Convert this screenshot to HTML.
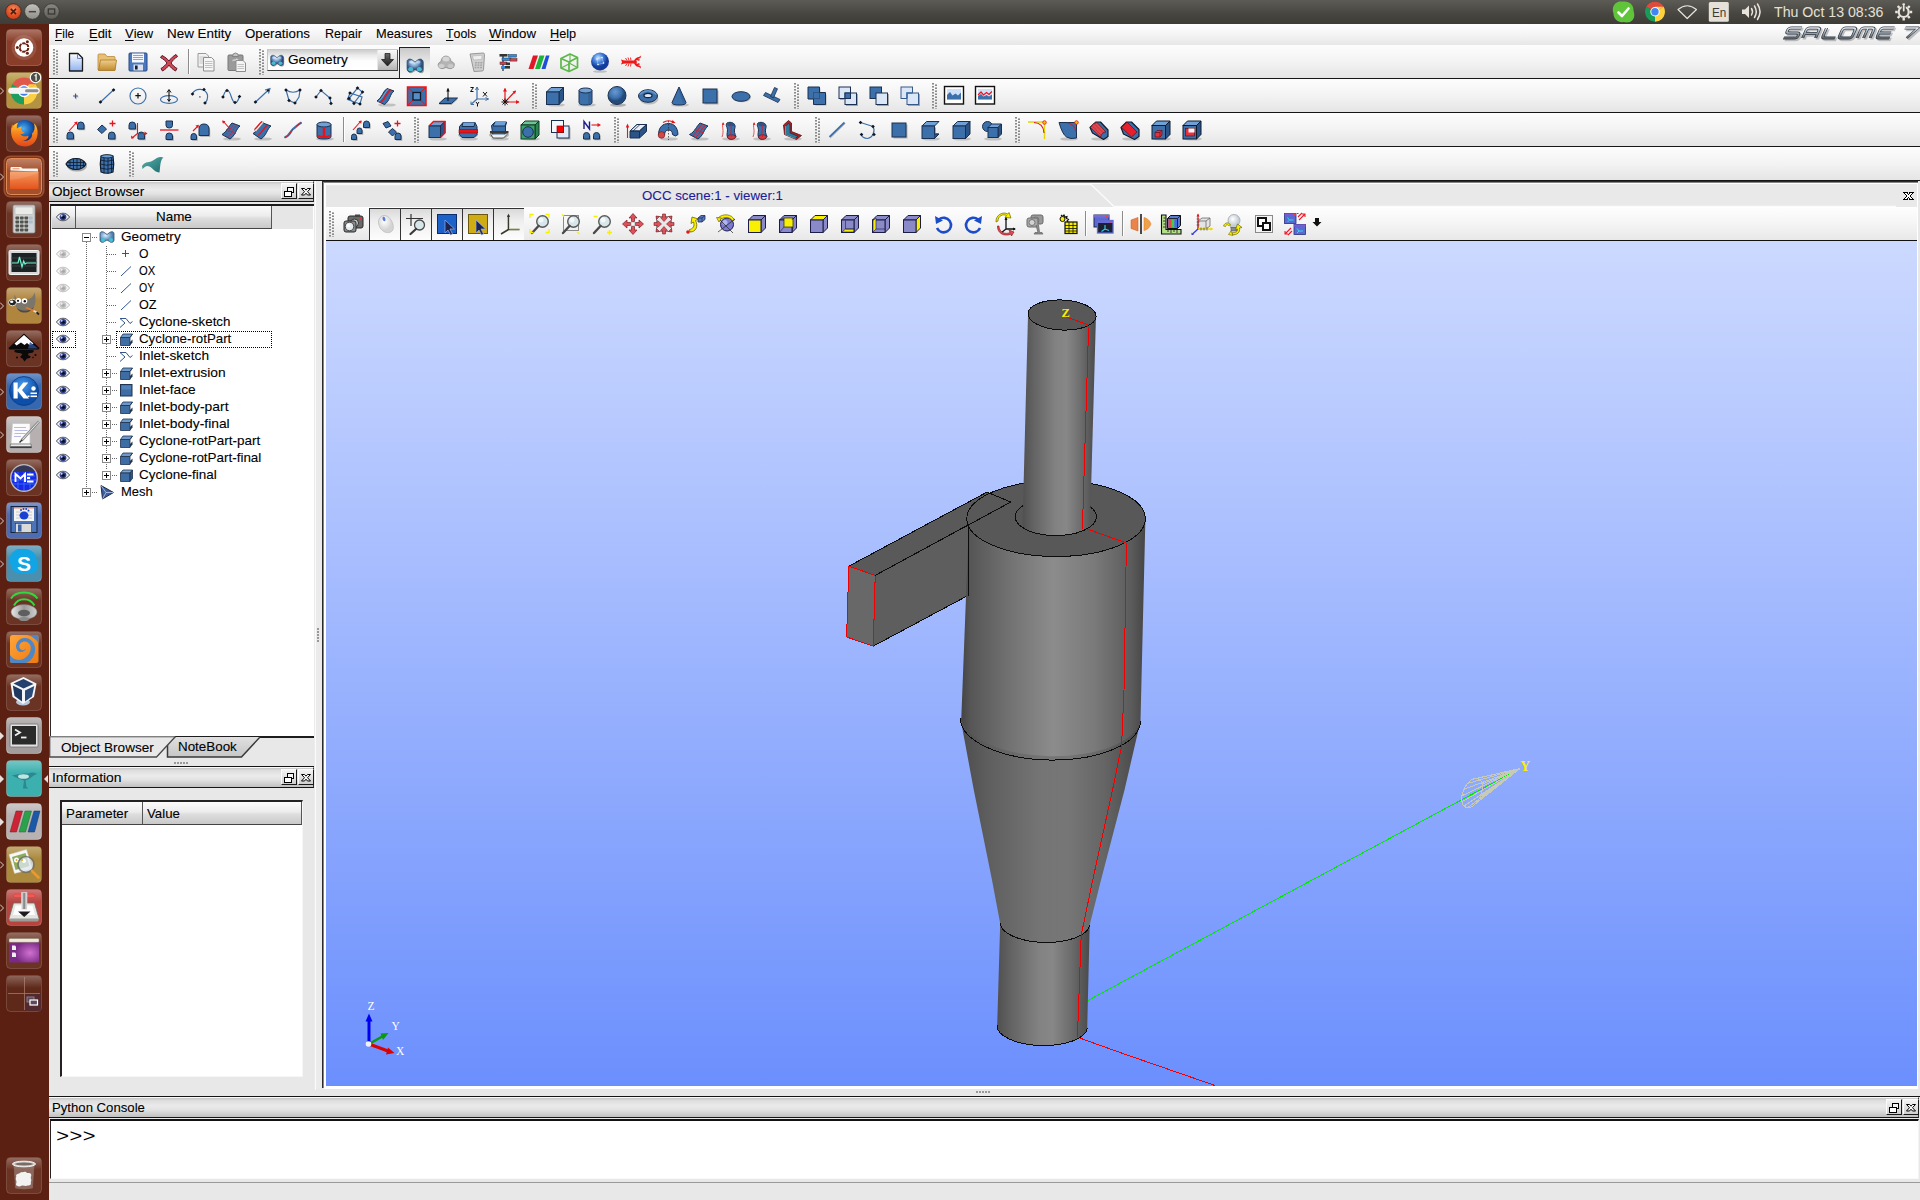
<!DOCTYPE html>
<html><head><meta charset="utf-8"><title>SALOME 7</title>
<style>
html,body{margin:0;padding:0;}
body{width:1920px;height:1200px;overflow:hidden;position:relative;background:#e8e8e8;
 font-family:"Liberation Sans",sans-serif;font-size:14px;color:#000;}
.a{position:absolute;}
.t{position:absolute;white-space:nowrap;line-height:1;}
svg{position:absolute;overflow:visible;}

#panel{left:0;top:0;width:1920px;height:24px;background:linear-gradient(#5d5b55,#46453f 60%,#3d3c37);}
#lbar{left:0;top:24px;width:49px;height:1176px;background:#5b2011;}
#menubar{left:49px;top:24px;width:1871px;height:21px;background:linear-gradient(#ffffff,#f4f4f4 50%,#e7e7e7);}
.tb{left:49px;width:1871px;height:33px;background:linear-gradient(#fdfdfd,#f3f3f3 50%,#e5e5e5);border-bottom:1px solid #161616;}
.menu{top:27px;font-size:14px;}
.menu u{text-decoration:none;display:inline-block;height:13px;border-bottom:1px solid #000;}
.grip{width:6px;height:24px;background-image:linear-gradient(#858585 55%,transparent 55%),linear-gradient(#858585 55%,transparent 55%);background-size:2px 3px,2px 3px;background-position:0 0,3px 1.500px;background-repeat:repeat-y;}
.gripc{position:absolute;width:1.500px;background-image:linear-gradient(#8c8c8c 50%,transparent 50%);background-size:1.500px 3px;}
.dtitle{background:linear-gradient(#c6c6c6,#dedede 14%,#ebebeb 42%,#e2e2e2 62%,#c0c0c0);border-top:1px solid #fafafa;border-bottom:1px solid #151515;border-right:1px solid #333;box-sizing:border-box;}
.dbtn{width:16px;height:16px;border-right:1px solid #1a1a1a;border-bottom:1px solid #1a1a1a;border-left:1px solid #fbfbfb;border-top:1px solid #fbfbfb;box-sizing:border-box;background:linear-gradient(#f4f4f4,#e2e2e2 50%,#cfcfcf);}
.hdr{background:linear-gradient(#fbfbfb,#ececec 45%,#dedede 55%,#c9c9c9);border-right:1px solid #555;border-bottom:1px solid #444;box-sizing:border-box;}
.row{font-size:14px;}
.eb{width:9px;height:9px;box-sizing:border-box;border:1px solid #8a8a8a;background:#fff;}
.eb:before{content:"";position:absolute;left:1px;top:3px;width:5px;height:1px;background:#000;}
.eb.p:after{content:"";position:absolute;left:3px;top:1px;width:1px;height:5px;background:#000;}
.dotv{width:1px;background-image:linear-gradient(#666 50%,transparent 50%);background-size:1px 2px;}
.doth{height:1px;background-image:linear-gradient(90deg,#666 50%,transparent 50%);background-size:2px 1px;}

.sep{width:1px;background:#8c8c8c;}
</style></head>
<body>
<div class="a" id="panel"></div>
<div class="a" id="lbar"></div>
<svg style="left:0;top:0" width="70" height="24"><defs><radialGradient id="wb1" cx="50%" cy="35%"><stop offset="0" stop-color="#f48a5c"/><stop offset="1" stop-color="#d9481f"/></radialGradient><linearGradient id="wb2" x1="0" y1="0" x2="0" y2="1"><stop offset="0" stop-color="#c4c2bc"/><stop offset="1" stop-color="#8f8d87"/></linearGradient><linearGradient id="wb3" x1="0" y1="0" x2="0" y2="1"><stop offset="0" stop-color="#8a8882"/><stop offset="1" stop-color="#5f5d58"/></linearGradient></defs><circle cx="13.400" cy="11.500" r="7.800" fill="url(#wb1)" stroke="#3a2a22" stroke-width=".8"/><path d="M10.800 8.900l5.200 5.200M16 8.900l-5.200 5.200" stroke="#4a1c0c" stroke-width="1.500"/><circle cx="32.400" cy="11.500" r="7.800" fill="url(#wb2)" stroke="#3a3935" stroke-width=".8"/><path d="M28.800 11.700h7.200" stroke="#44433e" stroke-width="1.500"/><circle cx="51.500" cy="11.500" r="7.800" fill="url(#wb3)" stroke="#3a3935" stroke-width=".8"/><rect x="48.300" y="9" width="6.400" height="5" fill="none" stroke="#3a3935" stroke-width="1.300"/></svg>
<svg style="left:1600px;top:0" width="320" height="24"><path d="M17 2.500C19 .8 21.500 1.800 23.500 1.500 29.500 1 34 5 33.500 11c1.500 3.500 1 8-2 10-2.500 2-5.500 1.500-8 1C18.500 23 13.500 19.500 13.500 13.500 12 9 13 4.500 17 2.500Z" fill="#5fc43a"/><path d="M18.500 12.500l3.500 3.500 6.500-7.500" stroke="#fff" stroke-width="2.600" fill="none" stroke-linecap="round" stroke-linejoin="round"/><g transform="translate(55 11.700)"><path d="M0 0L-8.660 -5A10 10 0 0 1 8.660 -5Z" fill="#de4b3c"/><path d="M0 0L8.660 -5A10 10 0 0 1 0 10Z" fill="#fdd23a"/><path d="M0 0L0 10A10 10 0 0 1 -8.660 -5Z" fill="#1a9c58"/><path d="M0 0L8.660 -5H0Z" fill="#fdd23a"/><circle r="4.700" fill="#fff"/><circle r="3.700" fill="#4285f4"/></g><path d="M78 9.500Q87 2 96.500 9.500L87.200 18.500Z" fill="none" stroke="#e8e4dc" stroke-width="1.200" stroke-linejoin="round"/><rect x="108.800" y="2" width="20" height="19.700" rx="1.500" fill="#e6e1d8"/><path d="M142 9.500h3l4-4v12.500l-4-4h-3Z" fill="#e8e4dc"/><path d="M151.500 8.500q2 3 0 6.500M154.500 6q3.500 5.500 0 11.500M157.500 4q5 7.500 0 15.500" stroke="#e8e4dc" stroke-width="1.500" fill="none" stroke-linecap="round"/><g transform="translate(303.700 12)" stroke="#e8e4dc" fill="none"><circle r="5" stroke-width="2.200"/><path d="M0 -8.500V-6M0 8.500V6M-8.500 0H-6M8.500 0H6M-6 -6l1.800 1.800M6 6L4.200 4.200M-6 6l1.800-1.800M6 -6L4.200 -4.200" stroke-width="2.400"/><path d="M0 -7V-1" stroke="#46453f" stroke-width="4"/><path d="M0 -7.500V-1.500" stroke-width="1.800" stroke-linecap="round"/></g></svg>
<div class="t " style="left:1712.1px;top:5.5px;font-size:13.5px;color:#3c3b37;transform:scaleX(0.8658);transform-origin:0 0;">En</div>
<div class="t " style="left:1773.8px;top:4px;font-size:15px;color:#e4e0d6;transform:scaleX(0.9439);transform-origin:0 0;">Thu Oct 13 08:36</div>
<div class="a" id="menubar"></div>
<div class="t menu" style="left:55.3px;top:27px;font-size:13.5px;color:#000;transform:scaleX(0.8821);transform-origin:0 0;-webkit-text-stroke:.1px;"><u>F</u>ile</div>
<div class="t menu" style="left:88.6px;top:27px;font-size:13.5px;color:#000;transform:scaleX(0.9579);transform-origin:0 0;-webkit-text-stroke:.1px;"><u>E</u>dit</div>
<div class="t menu" style="left:125.3px;top:27px;font-size:13.5px;color:#000;transform:scaleX(0.9610);transform-origin:0 0;-webkit-text-stroke:.1px;"><u>V</u>iew</div>
<div class="t menu" style="left:167.3px;top:27px;font-size:13.5px;color:#000;transform:scaleX(0.9949);transform-origin:0 0;-webkit-text-stroke:.1px;">New Entity</div>
<div class="t menu" style="left:245.3px;top:27px;font-size:13.5px;color:#000;transform:scaleX(0.9826);transform-origin:0 0;-webkit-text-stroke:.1px;">Operations</div>
<div class="t menu" style="left:324.6px;top:27px;font-size:13.5px;color:#000;transform:scaleX(0.9276);transform-origin:0 0;-webkit-text-stroke:.1px;">Repair</div>
<div class="t menu" style="left:375.6px;top:27px;font-size:13.5px;color:#000;transform:scaleX(0.9497);transform-origin:0 0;-webkit-text-stroke:.1px;">Measures</div>
<div class="t menu" style="left:446.3px;top:27px;font-size:13.5px;color:#000;transform:scaleX(0.9170);transform-origin:0 0;-webkit-text-stroke:.1px;"><u>T</u>ools</div>
<div class="t menu" style="left:488.9px;top:27px;font-size:13.5px;color:#000;transform:scaleX(0.9785);transform-origin:0 0;-webkit-text-stroke:.1px;"><u>W</u>indow</div>
<div class="t menu" style="left:550.3px;top:27px;font-size:13.5px;color:#000;transform:scaleX(0.9436);transform-origin:0 0;-webkit-text-stroke:.1px;"><u>H</u>elp</div>
<svg style="left:1780px;top:27px" width="140" height="16"><defs><linearGradient id="slg" x1="0" y1="0" x2="0" y2="1"><stop offset="0" stop-color="#e4ebf2"/><stop offset=".5" stop-color="#9aa6b4"/><stop offset="1" stop-color="#5c6670"/></linearGradient></defs><path d="M14 1H3.500Q1 1 1 3V4.200Q1 6 3.500 6H11.500Q14 6 14 8V9Q14 11 11.500 11H0.500" fill="none" stroke-linejoin="round" stroke="#000" stroke-opacity=".22" stroke-width="3.400" transform="translate(9.5 1.500) skewX(-24)"/><path d="M1 11V3.500Q1 1 3.500 1H11.500Q14 1 14 3.500V11M1 6.500H14" fill="none" stroke-linejoin="round" stroke="#000" stroke-opacity=".22" stroke-width="3.400" transform="translate(28.0 1.500) skewX(-24)"/><path d="M1 1V8.500Q1 11 3.500 11H14" fill="none" stroke-linejoin="round" stroke="#000" stroke-opacity=".22" stroke-width="3.400" transform="translate(47.5 1.500) skewX(-24)"/><path d="M3.500 1H11.500Q14 1 14 3.500V8.500Q14 11 11.500 11H3.500Q1 11 1 8.500V3.500Q1 1 3.500 1Z" fill="none" stroke-linejoin="round" stroke="#000" stroke-opacity=".22" stroke-width="3.400" transform="translate(64.0 1.500) skewX(-24)"/><path d="M1 11V3.500Q1 1 3.500 1H11.500Q14 1 14 3.500V11M7.500 1V11" fill="none" stroke-linejoin="round" stroke="#000" stroke-opacity=".22" stroke-width="3.400" transform="translate(82.5 1.500) skewX(-24)"/><path d="M14 1H3.500Q1 1 1 3.500V8.500Q1 11 3.500 11H14M1 6H13" fill="none" stroke-linejoin="round" stroke="#000" stroke-opacity=".22" stroke-width="3.400" transform="translate(102.0 1.500) skewX(-24)"/><path d="M1 1H14L7 11" fill="none" stroke-linejoin="round" stroke="#000" stroke-opacity=".22" stroke-width="3.400" transform="translate(126.0 1.500) skewX(-24)"/><path d="M14 1H3.500Q1 1 1 3V4.200Q1 6 3.500 6H11.500Q14 6 14 8V9Q14 11 11.500 11H0.500" fill="none" stroke-linejoin="round" stroke="#343a42" stroke-width="3" transform="translate(8 0) skewX(-24)"/><path d="M1 11V3.500Q1 1 3.500 1H11.500Q14 1 14 3.500V11M1 6.500H14" fill="none" stroke-linejoin="round" stroke="#343a42" stroke-width="3" transform="translate(26.5 0) skewX(-24)"/><path d="M1 1V8.500Q1 11 3.500 11H14" fill="none" stroke-linejoin="round" stroke="#343a42" stroke-width="3" transform="translate(46 0) skewX(-24)"/><path d="M3.500 1H11.500Q14 1 14 3.500V8.500Q14 11 11.500 11H3.500Q1 11 1 8.500V3.500Q1 1 3.500 1Z" fill="none" stroke-linejoin="round" stroke="#343a42" stroke-width="3" transform="translate(62.5 0) skewX(-24)"/><path d="M1 11V3.500Q1 1 3.500 1H11.500Q14 1 14 3.500V11M7.500 1V11" fill="none" stroke-linejoin="round" stroke="#343a42" stroke-width="3" transform="translate(81 0) skewX(-24)"/><path d="M14 1H3.500Q1 1 1 3.500V8.500Q1 11 3.500 11H14M1 6H13" fill="none" stroke-linejoin="round" stroke="#343a42" stroke-width="3" transform="translate(100.5 0) skewX(-24)"/><path d="M1 1H14L7 11" fill="none" stroke-linejoin="round" stroke="#343a42" stroke-width="3" transform="translate(124.5 0) skewX(-24)"/><path d="M14 1H3.500Q1 1 1 3V4.200Q1 6 3.500 6H11.500Q14 6 14 8V9Q14 11 11.500 11H0.500" fill="none" stroke-linejoin="round" stroke="url(#slg)" stroke-width="1.500" transform="translate(8 0) skewX(-24)"/><path d="M1 11V3.500Q1 1 3.500 1H11.500Q14 1 14 3.500V11M1 6.500H14" fill="none" stroke-linejoin="round" stroke="url(#slg)" stroke-width="1.500" transform="translate(26.5 0) skewX(-24)"/><path d="M1 1V8.500Q1 11 3.500 11H14" fill="none" stroke-linejoin="round" stroke="url(#slg)" stroke-width="1.500" transform="translate(46 0) skewX(-24)"/><path d="M3.500 1H11.500Q14 1 14 3.500V8.500Q14 11 11.500 11H3.500Q1 11 1 8.500V3.500Q1 1 3.500 1Z" fill="none" stroke-linejoin="round" stroke="url(#slg)" stroke-width="1.500" transform="translate(62.5 0) skewX(-24)"/><path d="M1 11V3.500Q1 1 3.500 1H11.500Q14 1 14 3.500V11M7.500 1V11" fill="none" stroke-linejoin="round" stroke="url(#slg)" stroke-width="1.500" transform="translate(81 0) skewX(-24)"/><path d="M14 1H3.500Q1 1 1 3.500V8.500Q1 11 3.500 11H14M1 6H13" fill="none" stroke-linejoin="round" stroke="url(#slg)" stroke-width="1.500" transform="translate(100.5 0) skewX(-24)"/><path d="M1 1H14L7 11" fill="none" stroke-linejoin="round" stroke="url(#slg)" stroke-width="1.500" transform="translate(124.5 0) skewX(-24)"/></svg>
<div class="a tb" style="top:45px"></div>
<div class="a tb" style="top:79px"></div>
<div class="a tb" style="top:113px"></div>
<div class="a tb" style="top:147px"></div>
<div class="a dtitle" style="left:49px;top:181px;width:265px;height:21px;"></div>
<div class="t " style="left:51.6px;top:185px;font-size:13.5px;color:#000;transform:scaleX(1.0002);transform-origin:0 0;-webkit-text-stroke:.1px;">Object Browser</div>
<div class="a dbtn" style="left:281px;top:183px;"></div><svg style="left:281px;top:183px" width="16" height="16" shape-rendering="crispEdges"><path d="M6.500 4h6v5.500h-6z" fill="#f4f4f4" stroke="#000" stroke-width="1"/><path d="M6.500 4.500h6" stroke="#000" stroke-width="1.600"/><path d="M3.500 8h6.500v5h-6.500z" fill="#fff" stroke="#000" stroke-width="1"/><path d="M3.500 8.500h6.500" stroke="#000" stroke-width="1.600"/></svg><div class="a dbtn" style="left:298px;top:183px;"></div><svg style="left:298px;top:183px" width="16" height="16"><path d="M3.500 5.500h3l1.500 1.700 1.500-1.700h3l-3 3.200 3 3.300h-3l-1.500-1.800-1.500 1.800h-3l3-3.300z" fill="#fff" stroke="#000" stroke-width="1"/></svg>
<div class="a " style="left:50px;top:204px;width:264px;height:532px;background:#fff;border-left:1px solid #2a2a2a;border-top:2px solid #1c1c1c;box-sizing:border-box;"></div>
<div class="a " style="left:51px;top:206px;width:262px;height:23px;background:#e6e6e6;"></div>
<div class="a hdr" style="left:52px;top:206px;width:24px;height:23px;"></div>
<div class="a hdr" style="left:76px;top:206px;width:196px;height:23px;"></div>
<svg style="left:56px;top:213px" width="14" height="8" viewBox="0 0 16 10" preserveAspectRatio="none"><path d="M0.5 5C3 1 6 0.3 8 0.3S13 1 15.5 5C13 8.6 10.5 9.7 8 9.7S3 8.6 0.5 5Z" fill="#f4f5fa" stroke="#26283a" stroke-width="1"/><circle cx="8" cy="5" r="3.9" fill="#2b3f8c"/><circle cx="8.3" cy="5.3" r="1.9" fill="#0a0d24"/><circle cx="6.4" cy="3.4" r="1.2" fill="#c9d2f2"/></svg>
<div class="t " style="left:155.9px;top:210px;font-size:13.5px;color:#000;transform:scaleX(0.9940);transform-origin:0 0;-webkit-text-stroke:.1px;">Name</div>
<div class="a dotv" style="left:86px;top:242px;width:1px;height:245px;"></div>
<div class="a dotv" style="left:106px;top:246px;width:1px;height:224px;"></div>
<div class="a eb " style="left:82px;top:233px"></div>
<div class="a doth" style="left:92px;top:237px;width:5px;height:1px;"></div>
<svg style="left:99px;top:229px" width="16" height="16" viewBox="0 0 16 16"><defs><radialGradient id="gg" cx="40%" cy="35%"><stop offset="0" stop-color="#d9ecfb"/><stop offset="1" stop-color="#4d7fb3"/></radialGradient></defs><path d="M1 4.5C1 2.5 4 2 6 4L8 5.5 10 4C12 2 15 2.5 15 4.5V11C15 13.5 12 14 10.5 12.5L8 11 5.5 12.5C4 14 1 13.5 1 11Z" fill="url(#gg)" stroke="#33506e" stroke-width=".8"/><circle cx="4" cy="11" r="2" fill="#3fc1d6"/><circle cx="12" cy="11" r="2" fill="#3fc1d6"/></svg>
<div class="t row" style="left:120.9px;top:230px;font-size:13.5px;color:#000;transform:scaleX(1.0071);transform-origin:0 0;-webkit-text-stroke:.1px;">Geometry</div>
<svg style="left:56px;top:250px" width="14" height="8" viewBox="0 0 16 10" preserveAspectRatio="none"><path d="M0.5 5C3 1 6 0.3 8 0.3S13 1 15.5 5C13 8.6 10.5 9.7 8 9.7S3 8.6 0.5 5Z" fill="#f6f6f6" stroke="#b0b0b0" stroke-width="1"/><circle cx="8" cy="5" r="3.9" fill="#c4c4c4"/><circle cx="8.3" cy="5.3" r="1.9" fill="#a8a8a8"/><circle cx="6.4" cy="3.4" r="1.2" fill="#ededed"/></svg>
<div class="a doth" style="left:107px;top:254px;width:10px;height:1px;"></div>
<svg style="left:118px;top:246px" width="16" height="16" viewBox="0 0 16 16"><path d="M7.5 4v7M4 7.5h7" stroke="#33558c" stroke-width="1" fill="none"/></svg>
<div class="t row" style="left:138.9px;top:247px;font-size:13.5px;color:#000;transform:scaleX(0.9034);transform-origin:0 0;-webkit-text-stroke:.1px;">O</div>
<svg style="left:56px;top:267px" width="14" height="8" viewBox="0 0 16 10" preserveAspectRatio="none"><path d="M0.5 5C3 1 6 0.3 8 0.3S13 1 15.5 5C13 8.6 10.5 9.7 8 9.7S3 8.6 0.5 5Z" fill="#f6f6f6" stroke="#b0b0b0" stroke-width="1"/><circle cx="8" cy="5" r="3.9" fill="#c4c4c4"/><circle cx="8.3" cy="5.3" r="1.9" fill="#a8a8a8"/><circle cx="6.4" cy="3.4" r="1.2" fill="#ededed"/></svg>
<div class="a doth" style="left:107px;top:271px;width:10px;height:1px;"></div>
<svg style="left:118px;top:263px" width="16" height="16" viewBox="0 0 16 16"><path d="M3 13L13 3.5" stroke="#33558c" stroke-width="1" fill="none"/></svg>
<div class="t row" style="left:138.9px;top:264px;font-size:13.5px;color:#000;transform:scaleX(0.8301);transform-origin:0 0;-webkit-text-stroke:.1px;">OX</div>
<svg style="left:56px;top:284px" width="14" height="8" viewBox="0 0 16 10" preserveAspectRatio="none"><path d="M0.5 5C3 1 6 0.3 8 0.3S13 1 15.5 5C13 8.6 10.5 9.7 8 9.7S3 8.6 0.5 5Z" fill="#f6f6f6" stroke="#b0b0b0" stroke-width="1"/><circle cx="8" cy="5" r="3.9" fill="#c4c4c4"/><circle cx="8.3" cy="5.3" r="1.9" fill="#a8a8a8"/><circle cx="6.4" cy="3.4" r="1.2" fill="#ededed"/></svg>
<div class="a doth" style="left:107px;top:288px;width:10px;height:1px;"></div>
<svg style="left:118px;top:280px" width="16" height="16" viewBox="0 0 16 16"><path d="M3 13L13 3.5" stroke="#33558c" stroke-width="1" fill="none"/></svg>
<div class="t row" style="left:138.9px;top:281px;font-size:13.5px;color:#000;transform:scaleX(0.7840);transform-origin:0 0;-webkit-text-stroke:.1px;">OY</div>
<svg style="left:56px;top:301px" width="14" height="8" viewBox="0 0 16 10" preserveAspectRatio="none"><path d="M0.5 5C3 1 6 0.3 8 0.3S13 1 15.5 5C13 8.6 10.5 9.7 8 9.7S3 8.6 0.5 5Z" fill="#f6f6f6" stroke="#b0b0b0" stroke-width="1"/><circle cx="8" cy="5" r="3.9" fill="#c4c4c4"/><circle cx="8.3" cy="5.3" r="1.9" fill="#a8a8a8"/><circle cx="6.4" cy="3.4" r="1.2" fill="#ededed"/></svg>
<div class="a doth" style="left:107px;top:305px;width:10px;height:1px;"></div>
<svg style="left:118px;top:297px" width="16" height="16" viewBox="0 0 16 16"><path d="M3 13L13 3.5" stroke="#33558c" stroke-width="1" fill="none"/></svg>
<div class="t row" style="left:138.9px;top:298px;font-size:13.5px;color:#000;transform:scaleX(0.9333);transform-origin:0 0;-webkit-text-stroke:.1px;">OZ</div>
<svg style="left:56px;top:318px" width="14" height="8" viewBox="0 0 16 10" preserveAspectRatio="none"><path d="M0.5 5C3 1 6 0.3 8 0.3S13 1 15.5 5C13 8.6 10.5 9.7 8 9.7S3 8.6 0.5 5Z" fill="#f4f5fa" stroke="#26283a" stroke-width="1"/><circle cx="8" cy="5" r="3.9" fill="#2b3f8c"/><circle cx="8.3" cy="5.3" r="1.9" fill="#0a0d24"/><circle cx="6.4" cy="3.4" r="1.2" fill="#c9d2f2"/></svg>
<div class="a doth" style="left:107px;top:322px;width:10px;height:1px;"></div>
<svg style="left:118px;top:314px" width="16" height="16" viewBox="0 0 16 16"><path d="M14.5 7.5L12 9.5L8 4.5H2L7 9L2 13.5" stroke="#33558c" stroke-width="1" fill="none"/></svg>
<div class="t row" style="left:138.9px;top:315px;font-size:13.5px;color:#000;transform:scaleX(0.9914);transform-origin:0 0;-webkit-text-stroke:.1px;">Cyclone-sketch</div>
<svg style="left:56px;top:335px" width="14" height="8" viewBox="0 0 16 10" preserveAspectRatio="none"><path d="M0.5 5C3 1 6 0.3 8 0.3S13 1 15.5 5C13 8.6 10.5 9.7 8 9.7S3 8.6 0.5 5Z" fill="#f4f5fa" stroke="#26283a" stroke-width="1"/><circle cx="8" cy="5" r="3.9" fill="#2b3f8c"/><circle cx="8.3" cy="5.3" r="1.9" fill="#0a0d24"/><circle cx="6.4" cy="3.4" r="1.2" fill="#c9d2f2"/></svg>
<div class="a eb p" style="left:102px;top:335px"></div>
<div class="a doth" style="left:112px;top:339px;width:5px;height:1px;"></div>
<svg style="left:118px;top:331px" width="16" height="16" viewBox="0 0 16 16"><path d="M2.5 6.5L5 3h9.5L12 6.5Z" fill="#6e9acb" stroke="#1f3450" stroke-width=".8"/><path d="M2.5 6.5H12V14.5H2.5Z" fill="#3d6da3" stroke="#1f3450" stroke-width=".8"/><path d="M12 11L14.5 8.5V11.5L12 14.5Z" fill="#1f3450"/><path d="M12 6.5l2.5-3.5" stroke="#1f3450" stroke-width=".8"/></svg>
<div class="t row" style="left:138.9px;top:332px;font-size:13.5px;color:#000;transform:scaleX(0.9840);transform-origin:0 0;-webkit-text-stroke:.1px;">Cyclone-rotPart</div>
<svg style="left:56px;top:352px" width="14" height="8" viewBox="0 0 16 10" preserveAspectRatio="none"><path d="M0.5 5C3 1 6 0.3 8 0.3S13 1 15.5 5C13 8.6 10.5 9.7 8 9.7S3 8.6 0.5 5Z" fill="#f4f5fa" stroke="#26283a" stroke-width="1"/><circle cx="8" cy="5" r="3.9" fill="#2b3f8c"/><circle cx="8.3" cy="5.3" r="1.9" fill="#0a0d24"/><circle cx="6.4" cy="3.4" r="1.2" fill="#c9d2f2"/></svg>
<div class="a doth" style="left:107px;top:356px;width:10px;height:1px;"></div>
<svg style="left:118px;top:348px" width="16" height="16" viewBox="0 0 16 16"><path d="M14.5 7.5L12 9.5L8 4.5H2L7 9L2 13.5" stroke="#33558c" stroke-width="1" fill="none"/></svg>
<div class="t row" style="left:138.9px;top:349px;font-size:13.5px;color:#000;transform:scaleX(1.0140);transform-origin:0 0;-webkit-text-stroke:.1px;">Inlet-sketch</div>
<svg style="left:56px;top:369px" width="14" height="8" viewBox="0 0 16 10" preserveAspectRatio="none"><path d="M0.5 5C3 1 6 0.3 8 0.3S13 1 15.5 5C13 8.6 10.5 9.7 8 9.7S3 8.6 0.5 5Z" fill="#f4f5fa" stroke="#26283a" stroke-width="1"/><circle cx="8" cy="5" r="3.9" fill="#2b3f8c"/><circle cx="8.3" cy="5.3" r="1.9" fill="#0a0d24"/><circle cx="6.4" cy="3.4" r="1.2" fill="#c9d2f2"/></svg>
<div class="a eb p" style="left:102px;top:369px"></div>
<div class="a doth" style="left:112px;top:373px;width:5px;height:1px;"></div>
<svg style="left:118px;top:365px" width="16" height="16" viewBox="0 0 16 16"><path d="M2.5 6.5L5 3h9.5L12 6.5Z" fill="#6e9acb" stroke="#1f3450" stroke-width=".8"/><path d="M2.5 6.5H12V14.5H2.5Z" fill="#3d6da3" stroke="#1f3450" stroke-width=".8"/><path d="M12 11L14.5 8.5V11.5L12 14.5Z" fill="#1f3450"/><path d="M12 6.5l2.5-3.5" stroke="#1f3450" stroke-width=".8"/></svg>
<div class="t row" style="left:138.9px;top:366px;font-size:13.5px;color:#000;transform:scaleX(1.0224);transform-origin:0 0;-webkit-text-stroke:.1px;">Inlet-extrusion</div>
<svg style="left:56px;top:386px" width="14" height="8" viewBox="0 0 16 10" preserveAspectRatio="none"><path d="M0.5 5C3 1 6 0.3 8 0.3S13 1 15.5 5C13 8.6 10.5 9.7 8 9.7S3 8.6 0.5 5Z" fill="#f4f5fa" stroke="#26283a" stroke-width="1"/><circle cx="8" cy="5" r="3.9" fill="#2b3f8c"/><circle cx="8.3" cy="5.3" r="1.9" fill="#0a0d24"/><circle cx="6.4" cy="3.4" r="1.2" fill="#c9d2f2"/></svg>
<div class="a eb p" style="left:102px;top:386px"></div>
<div class="a doth" style="left:112px;top:390px;width:5px;height:1px;"></div>
<svg style="left:118px;top:382px" width="16" height="16" viewBox="0 0 16 16"><rect x="2.5" y="2.5" width="11.5" height="11.5" fill="#3d6da3" stroke="#1f3450" stroke-width="1"/><rect x="3.5" y="3.5" width="9.5" height="4" fill="#5f8fc6" opacity=".6"/></svg>
<div class="t row" style="left:138.9px;top:383px;font-size:13.5px;color:#000;transform:scaleX(1.0210);transform-origin:0 0;-webkit-text-stroke:.1px;">Inlet-face</div>
<svg style="left:56px;top:403px" width="14" height="8" viewBox="0 0 16 10" preserveAspectRatio="none"><path d="M0.5 5C3 1 6 0.3 8 0.3S13 1 15.5 5C13 8.6 10.5 9.7 8 9.7S3 8.6 0.5 5Z" fill="#f4f5fa" stroke="#26283a" stroke-width="1"/><circle cx="8" cy="5" r="3.9" fill="#2b3f8c"/><circle cx="8.3" cy="5.3" r="1.9" fill="#0a0d24"/><circle cx="6.4" cy="3.4" r="1.2" fill="#c9d2f2"/></svg>
<div class="a eb p" style="left:102px;top:403px"></div>
<div class="a doth" style="left:112px;top:407px;width:5px;height:1px;"></div>
<svg style="left:118px;top:399px" width="16" height="16" viewBox="0 0 16 16"><path d="M2.5 6.5L5 3h9.5L12 6.5Z" fill="#6e9acb" stroke="#1f3450" stroke-width=".8"/><path d="M2.5 6.5H12V14.5H2.5Z" fill="#3d6da3" stroke="#1f3450" stroke-width=".8"/><path d="M12 11L14.5 8.5V11.5L12 14.5Z" fill="#1f3450"/><path d="M12 6.5l2.5-3.5" stroke="#1f3450" stroke-width=".8"/></svg>
<div class="t row" style="left:138.9px;top:400px;font-size:13.5px;color:#000;transform:scaleX(1.0282);transform-origin:0 0;-webkit-text-stroke:.1px;">Inlet-body-part</div>
<svg style="left:56px;top:420px" width="14" height="8" viewBox="0 0 16 10" preserveAspectRatio="none"><path d="M0.5 5C3 1 6 0.3 8 0.3S13 1 15.5 5C13 8.6 10.5 9.7 8 9.7S3 8.6 0.5 5Z" fill="#f4f5fa" stroke="#26283a" stroke-width="1"/><circle cx="8" cy="5" r="3.9" fill="#2b3f8c"/><circle cx="8.3" cy="5.3" r="1.9" fill="#0a0d24"/><circle cx="6.4" cy="3.4" r="1.2" fill="#c9d2f2"/></svg>
<div class="a eb p" style="left:102px;top:420px"></div>
<div class="a doth" style="left:112px;top:424px;width:5px;height:1px;"></div>
<svg style="left:118px;top:416px" width="16" height="16" viewBox="0 0 16 16"><path d="M2.5 6.5L5 3h9.5L12 6.5Z" fill="#6e9acb" stroke="#1f3450" stroke-width=".8"/><path d="M2.5 6.5H12V14.5H2.5Z" fill="#3d6da3" stroke="#1f3450" stroke-width=".8"/><path d="M12 11L14.5 8.5V11.5L12 14.5Z" fill="#1f3450"/><path d="M12 6.5l2.5-3.5" stroke="#1f3450" stroke-width=".8"/></svg>
<div class="t row" style="left:138.9px;top:417px;font-size:13.5px;color:#000;transform:scaleX(1.0241);transform-origin:0 0;-webkit-text-stroke:.1px;">Inlet-body-final</div>
<svg style="left:56px;top:437px" width="14" height="8" viewBox="0 0 16 10" preserveAspectRatio="none"><path d="M0.5 5C3 1 6 0.3 8 0.3S13 1 15.5 5C13 8.6 10.5 9.7 8 9.7S3 8.6 0.5 5Z" fill="#f4f5fa" stroke="#26283a" stroke-width="1"/><circle cx="8" cy="5" r="3.9" fill="#2b3f8c"/><circle cx="8.3" cy="5.3" r="1.9" fill="#0a0d24"/><circle cx="6.4" cy="3.4" r="1.2" fill="#c9d2f2"/></svg>
<div class="a eb p" style="left:102px;top:437px"></div>
<div class="a doth" style="left:112px;top:441px;width:5px;height:1px;"></div>
<svg style="left:118px;top:433px" width="16" height="16" viewBox="0 0 16 16"><path d="M2.5 6.5L5 3h9.5L12 6.5Z" fill="#6e9acb" stroke="#1f3450" stroke-width=".8"/><path d="M2.5 6.5H12V14.5H2.5Z" fill="#3d6da3" stroke="#1f3450" stroke-width=".8"/><path d="M12 11L14.5 8.5V11.5L12 14.5Z" fill="#1f3450"/><path d="M12 6.5l2.5-3.5" stroke="#1f3450" stroke-width=".8"/></svg>
<div class="t row" style="left:138.9px;top:434px;font-size:13.5px;color:#000;transform:scaleX(0.9971);transform-origin:0 0;-webkit-text-stroke:.1px;">Cyclone-rotPart-part</div>
<svg style="left:56px;top:454px" width="14" height="8" viewBox="0 0 16 10" preserveAspectRatio="none"><path d="M0.5 5C3 1 6 0.3 8 0.3S13 1 15.5 5C13 8.6 10.5 9.7 8 9.7S3 8.6 0.5 5Z" fill="#f4f5fa" stroke="#26283a" stroke-width="1"/><circle cx="8" cy="5" r="3.9" fill="#2b3f8c"/><circle cx="8.3" cy="5.3" r="1.9" fill="#0a0d24"/><circle cx="6.4" cy="3.4" r="1.2" fill="#c9d2f2"/></svg>
<div class="a eb p" style="left:102px;top:454px"></div>
<div class="a doth" style="left:112px;top:458px;width:5px;height:1px;"></div>
<svg style="left:118px;top:450px" width="16" height="16" viewBox="0 0 16 16"><path d="M2.5 6.5L5 3h9.5L12 6.5Z" fill="#6e9acb" stroke="#1f3450" stroke-width=".8"/><path d="M2.5 6.5H12V14.5H2.5Z" fill="#3d6da3" stroke="#1f3450" stroke-width=".8"/><path d="M12 11L14.5 8.5V11.5L12 14.5Z" fill="#1f3450"/><path d="M12 6.5l2.5-3.5" stroke="#1f3450" stroke-width=".8"/></svg>
<div class="t row" style="left:138.9px;top:451px;font-size:13.5px;color:#000;transform:scaleX(0.9939);transform-origin:0 0;-webkit-text-stroke:.1px;">Cyclone-rotPart-final</div>
<svg style="left:56px;top:471px" width="14" height="8" viewBox="0 0 16 10" preserveAspectRatio="none"><path d="M0.5 5C3 1 6 0.3 8 0.3S13 1 15.5 5C13 8.6 10.5 9.7 8 9.7S3 8.6 0.5 5Z" fill="#f4f5fa" stroke="#26283a" stroke-width="1"/><circle cx="8" cy="5" r="3.9" fill="#2b3f8c"/><circle cx="8.3" cy="5.3" r="1.9" fill="#0a0d24"/><circle cx="6.4" cy="3.4" r="1.2" fill="#c9d2f2"/></svg>
<div class="a eb p" style="left:102px;top:471px"></div>
<div class="a doth" style="left:112px;top:475px;width:5px;height:1px;"></div>
<svg style="left:118px;top:467px" width="16" height="16" viewBox="0 0 16 16"><path d="M2.5 6L5 3h9.5L12 6Z" fill="#7ea7d4" stroke="#1f3450" stroke-width=".8"/><path d="M2.5 6H12V14.5H2.5Z" fill="#3d6da3" stroke="#1f3450" stroke-width=".8"/><path d="M12 6L14.5 3V11.5L12 14.5Z" fill="#2c5688" stroke="#1f3450" stroke-width=".8"/></svg>
<div class="t row" style="left:138.9px;top:468px;font-size:13.5px;color:#000;transform:scaleX(0.9968);transform-origin:0 0;-webkit-text-stroke:.1px;">Cyclone-final</div>
<div class="a eb p" style="left:82px;top:488px"></div>
<div class="a doth" style="left:92px;top:492px;width:5px;height:1px;"></div>
<svg style="left:99px;top:484px" width="16" height="16" viewBox="0 0 16 16"><path d="M2 1.5L14.5 8.5 3.5 15Z" fill="#3b5fa0" stroke="#20283c" stroke-width="1"/><path d="M2 1.5L7 8.5 3.5 15M7 8.5h7.5" stroke="#b8c8e8" stroke-width=".8" fill="none"/></svg>
<div class="t row" style="left:120.9px;top:485px;font-size:13.5px;color:#000;transform:scaleX(0.9602);transform-origin:0 0;-webkit-text-stroke:.1px;">Mesh</div>
<div class="a " style="left:52px;top:331px;width:24px;height:17px;border:1px dotted #000;box-sizing:border-box;"></div>
<div class="a " style="left:116px;top:331px;width:156px;height:17px;border:1px dotted #000;box-sizing:border-box;"></div>
<svg style="left:49px;top:736px" width="266" height="24"><defs><linearGradient id="tabg" x1="0" y1="0" x2="0" y2="1"><stop offset="0" stop-color="#e0e0e0"/><stop offset="1" stop-color="#c6c6c6"/></linearGradient></defs><path d="M126 1H265" stroke="#1c1c1c" stroke-width="2"/><path d="M118 21V3L127 1H211L193 21Z" fill="url(#tabg)"/><path d="M118.500 6V21H192.500L211 1" stroke="#3a3a3a" stroke-width="1.500" fill="none"/><path d="M1 1V21H107.500L126 1" fill="#e8e8e8" stroke="none"/><path d="M0 .8H126" stroke="#555" stroke-width="1"/><path d="M.7 1V21H107.500L126.500 .5" stroke="#4a4a4a" stroke-width="1.300" fill="none"/></svg>
<div class="t " style="left:60.9px;top:741px;font-size:13.5px;color:#000;transform:scaleX(1.0056);transform-origin:0 0;-webkit-text-stroke:.1px;">Object Browser</div>
<div class="t " style="left:178.4px;top:740px;font-size:13.5px;color:#000;transform:scaleX(0.9916);transform-origin:0 0;-webkit-text-stroke:.1px;">NoteBook</div>
<div class="a " style="left:174px;top:762px;width:14px;height:2px;background-image:linear-gradient(90deg,#999 66%,transparent 66%);background-size:3px 2px;"></div>
<div class="a " style="left:49px;top:766px;width:265px;height:1px;background:#151515;"></div>
<div class="a dtitle" style="left:49px;top:767px;width:265px;height:21px;"></div>
<div class="t " style="left:51.8px;top:771px;font-size:13.5px;color:#000;transform:scaleX(1.0304);transform-origin:0 0;-webkit-text-stroke:.1px;">Information</div>
<div class="a dbtn" style="left:281px;top:769px;"></div><svg style="left:281px;top:769px" width="16" height="16" shape-rendering="crispEdges"><path d="M6.500 4h6v5.500h-6z" fill="#f4f4f4" stroke="#000" stroke-width="1"/><path d="M6.500 4.500h6" stroke="#000" stroke-width="1.600"/><path d="M3.500 8h6.500v5h-6.500z" fill="#fff" stroke="#000" stroke-width="1"/><path d="M3.500 8.500h6.500" stroke="#000" stroke-width="1.600"/></svg><div class="a dbtn" style="left:298px;top:769px;"></div><svg style="left:298px;top:769px" width="16" height="16"><path d="M3.500 5.500h3l1.500 1.700 1.500-1.700h3l-3 3.200 3 3.300h-3l-1.500-1.800-1.500 1.800h-3l3-3.300z" fill="#fff" stroke="#000" stroke-width="1"/></svg>
<div class="a " style="left:60px;top:800px;width:243px;height:277px;background:#fff;border-left:2px solid #222;border-top:2px solid #222;border-right:1px solid #f6f6f6;border-bottom:1px solid #f6f6f6;box-sizing:border-box;"></div>
<div class="a hdr" style="left:62px;top:802px;width:81px;height:23px;"></div>
<div class="a hdr" style="left:143px;top:802px;width:159px;height:23px;"></div>
<div class="t " style="left:65.9px;top:807px;font-size:13.5px;color:#000;transform:scaleX(0.9868);transform-origin:0 0;-webkit-text-stroke:.1px;">Parameter</div>
<div class="t " style="left:146.8px;top:807px;font-size:13.5px;color:#000;transform:scaleX(0.9812);transform-origin:0 0;-webkit-text-stroke:.1px;">Value</div>
<div class="a " style="left:314px;top:181px;width:8px;height:908px;background:#ebebeb;"></div>
<div class="a " style="left:317px;top:628px;width:2px;height:14px;background-image:linear-gradient(#999 66%,transparent 66%);background-size:2px 3px;"></div>
<div class="a " style="left:322px;top:181px;width:1596px;height:907px;background:#858585;border-left:1.500px solid #2a2a2a;border-top:1px solid #2a2a2a;box-sizing:border-box;"></div>
<div class="a " style="left:324px;top:183px;width:1594px;height:906px;background:#fff;"></div>
<div class="a " style="left:326px;top:184px;width:1591px;height:902px;background:#e9e9e9;"></div>
<div class="a " style="left:315px;top:181px;width:1px;height:909px;background:#fbfbfb;"></div>
<svg style="left:326px;top:184px" width="1594" height="23"><rect x="0" y="0" width="1591" height="23" fill="#e9e9e9"/><path d="M0 0H765L788 23H0Z" fill="#e7e7e7"/><path d="M0 .5H765L788 22.5H1570" stroke="#fbfbfb" stroke-width="1.3" fill="none"/></svg>
<div class="t " style="left:642.1px;top:189px;font-size:13.5px;color:#1c1c96;transform:scaleX(0.9832);transform-origin:0 0;-webkit-text-stroke:.1px;">OCC scene:1 - viewer:1</div>
<svg style="left:1903px;top:191px" width="12" height="9" shape-rendering="crispEdges"><path d="M1 1.500h3l1.500 1.800 1.500-1.800h3L7.500 5 10 8.500h-3L5.500 6.700 4 8.500H1L3.500 5Z" fill="#fff" stroke="#000" stroke-width="1"/></svg>
<div class="a " style="left:326px;top:207px;width:1591px;height:33px;background:linear-gradient(#fefefe,#f6f6f6 45%,#e8e8e8);"></div>
<div class="a " style="left:326px;top:240px;width:1591px;height:1px;background:#111;"></div>
<div class="a " style="left:369px;top:208px;width:31px;height:32px;background:linear-gradient(#dadada,#efefef 40%,#fdfdfd);border-left:1px solid #333;border-top:1px solid #333;box-sizing:border-box;"></div>
<div class="a " style="left:400px;top:208px;width:31px;height:32px;background:linear-gradient(#dadada,#efefef 40%,#fdfdfd);border-left:1px solid #333;border-top:1px solid #333;box-sizing:border-box;"></div>
<div class="a " style="left:431px;top:208px;width:31px;height:32px;background:linear-gradient(#dadada,#efefef 40%,#fdfdfd);border-left:1px solid #333;border-top:1px solid #333;box-sizing:border-box;"></div>
<div class="a " style="left:462px;top:208px;width:31px;height:32px;background:linear-gradient(#dadada,#efefef 40%,#fdfdfd);border-left:1px solid #333;border-top:1px solid #333;box-sizing:border-box;"></div>
<div class="a " style="left:493px;top:208px;width:31px;height:32px;background:linear-gradient(#dadada,#efefef 40%,#fdfdfd);border-left:1px solid #333;border-top:1px solid #333;box-sizing:border-box;"></div>
<div class="a " style="left:976px;top:1091px;width:14px;height:2px;background-image:linear-gradient(90deg,#999 66%,transparent 66%);background-size:3px 2px;"></div>
<div class="a " style="left:49px;top:1096px;width:1871px;height:1px;background:#151515;"></div>
<div class="a dtitle" style="left:49px;top:1097px;width:1870px;height:21px;"></div>
<div class="t " style="left:51.8px;top:1101px;font-size:13.5px;color:#000;transform:scaleX(0.9747);transform-origin:0 0;-webkit-text-stroke:.1px;">Python Console</div>
<div class="a dbtn" style="left:1886px;top:1099px;"></div><svg style="left:1886px;top:1099px" width="16" height="16" shape-rendering="crispEdges"><path d="M6.500 4h6v5.500h-6z" fill="#f4f4f4" stroke="#000" stroke-width="1"/><path d="M6.500 4.500h6" stroke="#000" stroke-width="1.600"/><path d="M3.500 8h6.500v5h-6.500z" fill="#fff" stroke="#000" stroke-width="1"/><path d="M3.500 8.500h6.500" stroke="#000" stroke-width="1.600"/></svg><div class="a dbtn" style="left:1903px;top:1099px;"></div><svg style="left:1903px;top:1099px" width="16" height="16"><path d="M3.500 5.500h3l1.500 1.700 1.500-1.700h3l-3 3.200 3 3.300h-3l-1.500-1.800-1.500 1.800h-3l3-3.300z" fill="#fff" stroke="#000" stroke-width="1"/></svg>
<div class="a " style="left:50px;top:1119px;width:1869px;height:60px;background:#fff;border-left:1px solid #222;border-top:2px solid #111;border-right:1px solid #f4f4f4;border-bottom:1px solid #f8f8f8;box-sizing:border-box;"></div>
<div class="t " style="left:56.1px;top:1126.5px;font-size:22px;color:#000;font-family:'Liberation Mono',monospace;transform:scaleY(.86);">&gt;&gt;&gt;</div>
<div class="a " style="left:49px;top:1182px;width:1871px;height:18px;background:#e8e8e8;border-top:1px solid #9a9a9a;box-sizing:border-box;"></div><svg style="left:326px;top:241px;overflow:hidden" width="1591" height="845" viewBox="326 241 1591 845">
<defs>
<linearGradient id="bg" x1="0" y1="0" x2="0" y2="1"><stop offset="0" stop-color="#ccd9ff"/><stop offset="1" stop-color="#6b8ffd"/></linearGradient>
<linearGradient id="cyl" x1="0" y1="0" x2="1" y2="0"><stop offset="0" stop-color="#444"/><stop offset=".05" stop-color="#565656"/><stop offset=".28" stop-color="#747474"/><stop offset=".5" stop-color="#8c8c8c"/><stop offset=".72" stop-color="#7a7a7a"/><stop offset=".92" stop-color="#5c5c5c"/><stop offset="1" stop-color="#454545"/></linearGradient>
<linearGradient id="cyl2" x1="0" y1="0" x2="1" y2="0">
 <stop offset="0" stop-color="#505050"/><stop offset=".15" stop-color="#636363"/><stop offset=".45" stop-color="#828282"/>
 <stop offset=".6" stop-color="#878787"/><stop offset=".8" stop-color="#6c6c6c"/><stop offset="1" stop-color="#4a4a4a"/></linearGradient>
<linearGradient id="cone" x1="0" y1="0" x2="1" y2="0">
 <stop offset="0" stop-color="#4c4c4c"/><stop offset=".15" stop-color="#5e5e5e"/><stop offset=".45" stop-color="#757575"/>
 <stop offset=".6" stop-color="#767676"/><stop offset=".8" stop-color="#656565"/><stop offset="1" stop-color="#474747"/></linearGradient>
</defs>
<rect x="326" y="241" width="1591" height="845" fill="url(#bg)"/>
<path d="M1077.400 1037.200L1120 1052.500L1215 1085.500" stroke="#f00000" stroke-width="1" fill="none" shape-rendering="crispEdges"/>
<path d="M1088.200 1000.400L1120 983.200L1511 773.300" stroke="#00e800" stroke-width="1" fill="none" shape-rendering="crispEdges"/>
<g stroke="#c6cab6" stroke-width="1" fill="none" shape-rendering="crispEdges"><ellipse cx="1472" cy="793" rx="9" ry="15.5" transform="rotate(24 1472 793)"/><path d="M1520 768.500L1480.2 796.7"/><path d="M1520 768.500L1476.7 802.4"/><path d="M1520 768.500L1472.2 806.4"/><path d="M1520 768.500L1467.7 807.6"/><path d="M1520 768.500L1464.0 806.0"/><path d="M1520 768.500L1461.9 801.8"/><path d="M1520 768.500L1461.9 795.8"/><path d="M1520 768.500L1463.8 789.3"/><path d="M1520 768.500L1467.3 783.6"/><path d="M1520 768.500L1471.8 779.6"/><path d="M1520 768.500L1476.3 778.4"/><path d="M1520 768.500L1480.0 780.0"/><path d="M1520 768.500L1482.1 784.2"/><path d="M1520 768.500L1482.1 790.2"/></g>
<text x="1520" y="770.5" font-family="Liberation Serif,serif" font-weight="bold" font-size="14" fill="#ffee00">Y</text>
<path d="M848.800 566.200L987 492.100L1010.800 502L875.200 575.400Z" fill="#595959" stroke="#0c0c0c" stroke-width="1" shape-rendering="crispEdges"/>
<path d="M875.200 575.400L968 525L968 595.500L873.300 646.100Z" fill="#5e5e5e" stroke="#0c0c0c" stroke-width="1" shape-rendering="crispEdges"/>
<path d="M848.800 566.200L875.200 575.400L873.300 646.100L846.600 637Z" fill="#686868" stroke="#f00000" stroke-width="1" shape-rendering="crispEdges"/>
<path d="M1000.200 923.500L997.200 1025A45 19 1 0 0 1087.200 1028L1089.700 925Z" fill="url(#cyl2)"/>
<path d="M997.200 1025A45 19 1 0 0 1087.200 1028" fill="none" stroke="#0c0c0c" stroke-width="1" shape-rendering="crispEdges"/>
<path d="M960.400 718L973.800 790L992 880L1000.200 923.500A44.800 19 1 0 0 1089.700 925L1101 880L1124.500 790L1140.500 721Z" fill="url(#cone)"/>
<path d="M1000.200 923.500A44.800 19 1 0 0 1089.700 925" fill="none" stroke="#0c0c0c" stroke-width="1" shape-rendering="crispEdges"/>
<path d="M969 519L961.3 718A90 40.5 1 0 0 1140.5 721L1145.4 519Z" fill="url(#cyl)"/>
<path d="M960.400 718A90 40.500 1 0 0 1140.500 721" fill="none" stroke="#0c0c0c" stroke-width="1" shape-rendering="crispEdges"/>
<ellipse cx="1056.100" cy="518.600" rx="89.300" ry="37.900" fill="#585858" stroke="#0c0c0c" stroke-width="1" shape-rendering="crispEdges"/>
<path d="M875.200 575.400L1010.800 502L987 492.100" fill="none" stroke="#0c0c0c" stroke-width="1" shape-rendering="crispEdges"/>
<path d="M968 525V595.500" fill="none" stroke="#0c0c0c" stroke-width="1" shape-rendering="crispEdges"/>
<ellipse cx="1055.800" cy="516.800" rx="40.600" ry="18.700" fill="#575757" stroke="#0c0c0c" stroke-width="1" shape-rendering="crispEdges"/>
<path d="M1028 315L1022.500 527.500A40.600 18.700 0 0 0 1090 526.900L1096 315Z" fill="url(#cyl2)"/>
<path d="M1022.500 527.500A40.600 18.700 0 0 0 1090 526.900" fill="none" stroke="#0c0c0c" stroke-width="1" shape-rendering="crispEdges"/>
<ellipse cx="1062.100" cy="315" rx="34.100" ry="15" transform="rotate(2.500 1062 315)" fill="#585858" stroke="#0c0c0c" stroke-width="1" shape-rendering="crispEdges"/>
<path d="M1062 315.500L1087.500 324.500L1088.500 330L1082.400 529" fill="none" stroke="#f00000" stroke-width="1" shape-rendering="crispEdges"/>
<path d="M1087 529L1126.400 543L1124 690L1121.600 746L1112.500 790L1092.700 880L1081.200 935.200L1077.400 1037.200" fill="none" stroke="#f00000" stroke-width="1" shape-rendering="crispEdges"/>
<text x="1061.5" y="316.5" font-family="Liberation Serif,serif" font-weight="bold" font-size="12.5" fill="#ffee00">Z</text>
<g><path d="M369 1043V1020" stroke="#0000ee" stroke-width="3"/><path d="M369 1013.500L372.500 1021.500H365.500Z" fill="#0000ee"/><path d="M369 1044L384 1035.500" stroke="#0a9a0a" stroke-width="2.500"/><path d="M388.500 1033L383 1040L380.500 1033.500Z" fill="#0a9a0a"/><path d="M369 1044L388 1051" stroke="#dd0000" stroke-width="3"/><path d="M394.500 1053L386 1054.500L388 1047.500Z" fill="#dd0000"/><circle cx="368.500" cy="1044" r="2.800" fill="#f2f2f2"/><text x="367.500" y="1009.500" font-family="Liberation Serif,serif" font-size="11.500" fill="#fff">Z</text><text x="391.500" y="1029.500" font-family="Liberation Serif,serif" font-size="11.500" fill="#fff">Y</text><text x="396" y="1054.500" font-family="Liberation Serif,serif" font-size="11.500" fill="#fff">X</text></g>
</svg><svg width="0" height="0" style="left:0;top:0"><defs><linearGradient id="tgloss" x1="0" y1="0" x2="0" y2="1"><stop offset="0" stop-color="#fff" stop-opacity=".28"/><stop offset="1" stop-color="#fff" stop-opacity="0"/></linearGradient><radialGradient id="ffb" cx="45%" cy="35%"><stop offset="0" stop-color="#4fb2ef"/><stop offset=".6" stop-color="#1a62b8"/><stop offset="1" stop-color="#0b2f78"/></radialGradient><linearGradient id="ffo" x1="0" y1="0" x2="0" y2="1"><stop offset="0" stop-color="#ffcf3a"/><stop offset=".4" stop-color="#f88a1c"/><stop offset="1" stop-color="#e2461a"/></linearGradient><linearGradient id="fold" x1="0" y1="0" x2="0" y2="1"><stop offset="0" stop-color="#f59a5f"/><stop offset="1" stop-color="#e4531c"/></linearGradient><radialGradient id="kbl" cx="45%" cy="30%"><stop offset="0" stop-color="#4a9bef"/><stop offset="1" stop-color="#0c4ea8"/></radialGradient><radialGradient id="purp" cx="70%" cy="60%"><stop offset="0" stop-color="#d071d0"/><stop offset="1" stop-color="#7a2a86"/></radialGradient><linearGradient id="spk" x1="0" y1="0" x2="1" y2="0"><stop offset="0" stop-color="#e8e8e8"/><stop offset=".5" stop-color="#9a9a9a"/><stop offset="1" stop-color="#d0d0d0"/></linearGradient><linearGradient id="orsw" x1="0" y1="0" x2="1" y2="1"><stop offset="0" stop-color="#ffa53a"/><stop offset="1" stop-color="#ee7a10"/></linearGradient></defs></svg>
<svg style="left:6px;top:29px" width="36" height="37" viewBox="0 0 36 37"><rect x=".5" y=".5" width="35" height="36" rx="4" fill="#8a3d28" stroke="rgba(255,255,255,.22)" stroke-width="1"/><rect x="1" y="1" width="34" height="12" rx="3.500" fill="url(#tgloss)"/><circle cx="18" cy="18.500" r="12.500" fill="#fff" opacity=".12"/><circle cx="18" cy="18.500" r="9.300" fill="#fff"/><circle cx="18" cy="18.500" r="4.300" fill="none" stroke="#6a1f12" stroke-width="2.100"/><circle cx="11.30" cy="18.50" r="2.300" fill="#fff"/><circle cx="11.30" cy="18.50" r="1.500" fill="#6a1f12"/><circle cx="21.35" cy="12.70" r="2.300" fill="#fff"/><circle cx="21.35" cy="12.70" r="1.500" fill="#6a1f12"/><circle cx="21.35" cy="24.30" r="2.300" fill="#fff"/><circle cx="21.35" cy="24.30" r="1.500" fill="#6a1f12"/><path d="M21.00 18.50L24.00 18.50" stroke="#fff" stroke-width=".9"/><path d="M16.50 21.10L15.00 23.70" stroke="#fff" stroke-width=".9"/><path d="M16.50 15.90L15.00 13.30" stroke="#fff" stroke-width=".9"/></svg>
<svg style="left:6px;top:72px" width="36" height="37" viewBox="0 0 36 37"><rect x=".5" y=".5" width="35" height="36" rx="4" fill="#b3933f" stroke="rgba(255,255,255,.12)" stroke-width="1"/><rect x="1" y="1" width="34" height="12" rx="3.500" fill="url(#tgloss)"/><g transform="translate(18 19)"><path d="M0 0L-11.700 -6.750A13.500 13.500 0 0 1 11.700 -6.750Z" fill="#e0574b"/><path d="M0 0L11.700 -6.750A13.500 13.500 0 0 1 0 13.500Z" fill="#f9d045"/><path d="M0 0L0 13.500A13.500 13.500 0 0 1 -11.700 -6.750Z" fill="#1e9e5c"/><path d="M0 0L11.700 -6.750L5 -6.750Z" fill="#f9d045"/><circle r="6.200" fill="#fff"/><circle r="4.800" fill="#3b7fe6"/></g><rect x="2.500" y="16" width="31" height="5.500" rx="2.700" fill="#f4f4f4" stroke="#fff" stroke-width=".6"/><rect x="19" y="17.200" width="13.500" height="3" rx="1.500" fill="#8d8d8d"/><circle cx="29.500" cy="5.500" r="5.200" fill="#4d4d4d" stroke="#fff" stroke-width="1.100"/><path d="M28.600 4l1.500-1.200v6" stroke="#e8f0d8" stroke-width="1.400" fill="none"/></svg>
<svg style="left:6px;top:115px" width="36" height="37" viewBox="0 0 36 37"><rect x=".5" y=".5" width="35" height="36" rx="4" fill="#6a3323" stroke="rgba(255,255,255,.16)" stroke-width="1"/><rect x="1" y="1" width="34" height="12" rx="3.500" fill="url(#tgloss)"/><circle cx="18.500" cy="17.500" r="12.500" fill="url(#ffb)"/><path d="M5.200 13.500C4 22 9 31.500 18.500 31.500S32.500 24 31.500 15.500C31 12 29.500 9.500 28 8.500 29.500 13 28 17 26 18.500 27 23 22 27 17 25.500 21 25.500 23.500 22 22 20.500 19.500 22 15.500 21.500 14.500 19 16 19 18 18.500 18.500 17.500 15.500 16.500 14.500 14 16 11.500 14 11.500 12 12.500 11 13.500 10.500 11.500 11 9 12.500 7.500 9 8.500 6 11 5.200 13.500Z" fill="url(#ffo)"/><path d="M6 9l1.500 3.500L5.500 13Z" fill="#f08a1c"/></svg>
<svg style="left:6px;top:158px" width="36" height="37" viewBox="0 0 36 37"><rect x="-1.500" y="-1.500" width="39" height="40" rx="5.500" fill="none" stroke="#e58a55" stroke-width="2" opacity=".45"/><rect x=".5" y=".5" width="35" height="36" rx="4" fill="#a5502c" stroke="#e08a58" stroke-width="1"/><rect x="1" y="1" width="34" height="12" rx="3.500" fill="url(#tgloss)"/><path d="M4.500 12.500V10q0-1 1-1h9.500l1.500 1.500h14.500q1 0 1 1v2Z" fill="#f6f6f4"/><rect x="6.500" y="10.300" width="7" height="1" fill="#f08a55"/><rect x="4" y="13.500" width="28.500" height="17.500" rx="1" fill="url(#fold)"/><path d="M4 22C14 21 24 18 32.500 15v-1.500H4Z" fill="#fff" opacity=".12"/></svg>
<svg style="left:6px;top:201px" width="36" height="37" viewBox="0 0 36 37"><rect x=".5" y=".5" width="35" height="36" rx="4" fill="#6a3323" stroke="rgba(255,255,255,.16)" stroke-width="1"/><rect x="1" y="1" width="34" height="12" rx="3.500" fill="url(#tgloss)"/><rect x="7" y="4" width="22" height="28" rx="1.500" fill="#cfcfcf" stroke="#8a8a8a" stroke-width=".8"/><rect x="9" y="6" width="18" height="7.500" rx="1" fill="#e9ebe6" stroke="#aaa" stroke-width=".5"/><rect x="9.5" y="15.5" width="3.600" height="3" rx=".7" fill="#50544e"/><rect x="14.0" y="15.5" width="3.600" height="3" rx=".7" fill="#50544e"/><rect x="18.5" y="15.5" width="3.600" height="3" rx=".7" fill="#50544e"/><rect x="9.5" y="19.5" width="3.600" height="3" rx=".7" fill="#50544e"/><rect x="14.0" y="19.5" width="3.600" height="3" rx=".7" fill="#50544e"/><rect x="18.5" y="19.5" width="3.600" height="3" rx=".7" fill="#50544e"/><rect x="9.5" y="23.5" width="3.600" height="3" rx=".7" fill="#50544e"/><rect x="14.0" y="23.5" width="3.600" height="3" rx=".7" fill="#50544e"/><rect x="18.5" y="23.5" width="3.600" height="3" rx=".7" fill="#50544e"/><rect x="9.5" y="27.5" width="3.600" height="3" rx=".7" fill="#50544e"/><rect x="14.0" y="27.5" width="3.600" height="3" rx=".7" fill="#50544e"/><rect x="18.5" y="27.5" width="3.600" height="3" rx=".7" fill="#50544e"/><rect x="23" y="15.500" width="3.600" height="3" rx=".7" fill="#a9bfd0"/><rect x="23" y="19.500" width="3.600" height="3" rx=".7" fill="#a9bfd0"/><rect x="23" y="23.500" width="3.600" height="7" rx=".9" fill="#c9d6e0"/></svg>
<svg style="left:6px;top:244px" width="36" height="37" viewBox="0 0 36 37"><rect x=".5" y=".5" width="35" height="36" rx="4" fill="#6a3323" stroke="rgba(255,255,255,.16)" stroke-width="1"/><rect x="1" y="1" width="34" height="12" rx="3.500" fill="url(#tgloss)"/><rect x="3" y="6.500" width="30" height="24" rx="1.200" fill="#d8d8d8" stroke="#f4f4f4" stroke-width="1"/><rect x="5.500" y="9" width="25" height="19" fill="#1d2324"/><path d="M5.500 14h25M5.500 18h25M5.500 22h25" stroke="#39403f" stroke-width="1"/><path d="M6 19h6l1.500-6 2.500 10 1.700-6 1.300 3 1.500-1h9.500" stroke="#6ff0cf" stroke-width="1.200" fill="none"/></svg>
<svg style="left:6px;top:287px" width="36" height="37" viewBox="0 0 36 37"><rect x=".5" y=".5" width="35" height="36" rx="4" fill="#b0853e" stroke="rgba(255,255,255,.12)" stroke-width="1"/><rect x="1" y="1" width="34" height="12" rx="3.500" fill="url(#tgloss)"/><path d="M8.500 7.500C10 11 11 13 13 14.500 17 12.500 22 13 25 11 27 9.500 28 7.500 28.500 5.500 30 10 30 17 27.500 21 24 25 16 25.500 12 22.500 9 20 8 12 8.500 7.500Z" fill="#7a766c"/><path d="M11 21C16 25 24 24.500 28 20 26 23.500 22 26 17 25.500 14 25.300 12 23.500 11 21Z" fill="#4e4a43"/><ellipse cx="6.500" cy="15.500" rx="4" ry="3.300" fill="#222" stroke="#ddd" stroke-width="1"/><ellipse cx="5.700" cy="14.700" rx="1.700" ry="1.200" fill="#fff"/><circle cx="12.500" cy="13.500" r="2.600" fill="#fff"/><circle cx="12" cy="13.800" r="1.100" fill="#111"/><circle cx="18.500" cy="14" r="2.800" fill="#fff"/><circle cx="18.800" cy="14.300" r="1.200" fill="#111"/><path d="M20 20.500l9 4" stroke="#e67a28" stroke-width="1.600"/><path d="M27.500 23.800l4 2" stroke="#ddd" stroke-width="1.800"/><path d="M30.500 25.300l2.500 2.200" stroke="#222" stroke-width="1.800"/></svg>
<svg style="left:6px;top:330px" width="36" height="37" viewBox="0 0 36 37"><rect x=".5" y=".5" width="35" height="36" rx="4" fill="#6a3323" stroke="rgba(255,255,255,.16)" stroke-width="1"/><rect x="1" y="1" width="34" height="12" rx="3.500" fill="url(#tgloss)"/><path d="M18 3.500L33 17.500q1 1.500-.5 2H3.500q-1.500-.5-.5-2Z" fill="#0a0a0a"/><path d="M18 5L27.500 13.500 24 15.500 21 13 18.500 15 15 12.500 10.500 15.500 8.500 13.500Z" fill="#fff"/><path d="M24 12L32 18.500H22Z" fill="#2a4a8c" opacity=".85"/><path d="M9 20h18c2 1.500 0 3-3 3-3 .5-2 2.500 0 3 2 1-1 2.500-3 2.500l-2.500 3-2-3c-2-.5-3-2-1-3s0-2.500-3-2.500c-4-.2-5-2-3.500-3Z" fill="#0a0a0a"/><circle cx="29.500" cy="25" r="1.100" fill="#0a0a0a"/><circle cx="11" cy="27.500" r="1" fill="#0a0a0a"/><circle cx="27" cy="27.500" r=".8" fill="#0a0a0a"/></svg>
<svg style="left:6px;top:373px" width="36" height="37" viewBox="0 0 36 37"><rect x=".5" y=".5" width="35" height="36" rx="4" fill="#3668b0" stroke="rgba(255,255,255,.2)" stroke-width="1"/><rect x="1" y="1" width="34" height="12" rx="3.500" fill="url(#tgloss)"/><circle cx="18" cy="18" r="14.500" fill="url(#kbl)" stroke="#0a3a88" stroke-width=".8"/><path d="M7.500 9.500h4.200v7l5.600-7h5l-6.300 7.500 7 8.500h-5.400l-5.900-7.500v7.500H7.500Z" fill="#fff"/><circle cx="27.500" cy="15.500" r="2.200" fill="#fff"/><rect x="24.500" y="19.500" width="6.500" height="1.600" fill="#fff"/><rect x="24.500" y="22.500" width="6.500" height="1.600" fill="#fff"/><rect x="21.500" y="22.500" width="2" height="1.600" fill="#fff"/></svg>
<svg style="left:6px;top:416px" width="36" height="37" viewBox="0 0 36 37"><rect x=".5" y=".5" width="35" height="36" rx="4" fill="#b6b1b0" stroke="rgba(255,255,255,.35)" stroke-width="1"/><rect x="1" y="1" width="34" height="12" rx="3.500" fill="url(#tgloss)"/><path d="M6.500 7.500h17.500v20.500H5Z" fill="#fbfbfb" stroke="#c4c4c4" stroke-width=".6"/><path d="M8 11.500h12M8.500 14.500h13M8.500 17.500h11M8 20.500h7" stroke="#b9b9e6" stroke-width="1"/><path d="M4.500 28h20.500l.5 3.500H4Z" fill="#e8e8e8" stroke="#555" stroke-width=".6"/><rect x="4.300" y="30.300" width="21.200" height="1.800" fill="#3c3c3c"/><path d="M33 5.500L15.500 24.500" stroke="#8c8c8c" stroke-width="2.600"/><path d="M33 5.500L16.500 23.500" stroke="#e6e6e6" stroke-width="1"/><path d="M16 24L13.500 26.500" stroke="#333" stroke-width="1.500"/></svg>
<svg style="left:6px;top:459px" width="36" height="37" viewBox="0 0 36 37"><rect x=".5" y=".5" width="35" height="36" rx="4" fill="#6a3323" stroke="rgba(255,255,255,.16)" stroke-width="1"/><rect x="1" y="1" width="34" height="12" rx="3.500" fill="url(#tgloss)"/><circle cx="18" cy="19" r="13.300" fill="#1a28e8" stroke="#b9b9b9" stroke-width="1.400"/><path d="M6.500 13A13.300 13.300 0 0 1 29.500 13Z" fill="#3a3a3a" opacity=".85"/><path d="M7 17h22M6 21h24M7 25h22M12 13v16M18 13v18M24 13v16" stroke="#3c8cff" stroke-width=".8" opacity=".8"/><path d="M9.500 23v-8l5 4.500 4.500-4.500v8" stroke="#fff" stroke-width="1.900" fill="none"/><path d="M27.500 15.500h-6.500M24 19h-3M27.500 22.500h-6.500" stroke="#fff" stroke-width="1.900" fill="none"/></svg>
<svg style="left:6px;top:502px" width="36" height="37" viewBox="0 0 36 37"><rect x=".5" y=".5" width="35" height="36" rx="4" fill="#4c6db4" stroke="rgba(255,255,255,.2)" stroke-width="1"/><rect x="1" y="1" width="34" height="12" rx="3.500" fill="url(#tgloss)"/><rect x="5" y="4.500" width="26" height="26" fill="#4b74b8" stroke="#16233c" stroke-width="1"/><rect x="8" y="5" width="20" height="14" fill="#f3f3f3"/><rect x="8" y="5" width="20" height="1.500" fill="#e08870"/><path d="M10 10h16M10 13h16M10 16h16" stroke="#bdbdbd" stroke-width=".8"/><rect x="9.500" y="21.500" width="16" height="9" fill="#d9d9d9" stroke="#333" stroke-width=".6"/><rect x="12" y="22.500" width="3.500" height="7" fill="#3b62a4"/><ellipse cx="18" cy="13.500" rx="4.500" ry="4" fill="#1741d0"/><circle cx="15" cy="8" r="1" fill="#1741d0"/><circle cx="17.500" cy="7" r="1" fill="#1741d0"/><circle cx="20.200" cy="7" r="1" fill="#1741d0"/><circle cx="22.500" cy="8.500" r="1" fill="#1741d0"/></svg>
<svg style="left:6px;top:545px" width="36" height="37" viewBox="0 0 36 37"><rect x=".5" y=".5" width="35" height="36" rx="4" fill="#4a90ae" stroke="rgba(255,255,255,.2)" stroke-width="1"/><rect x="1" y="1" width="34" height="12" rx="3.500" fill="url(#tgloss)"/><path d="M9 5.500C12 3 15 4.500 17.500 4 24 3.500 30.500 8 30.500 15c2.500 4 2 9-1 11.500-3 3-7 2.500-9.500 2C12 30.500 5 26 4.500 19 2.500 15 4 8.500 9 5.500Z" fill="#12a5e6"/><text x="18" y="25.500" text-anchor="middle" font-family="Liberation Sans,sans-serif" font-weight="bold" font-size="21" fill="#fff">S</text></svg>
<svg style="left:6px;top:588px" width="36" height="37" viewBox="0 0 36 37"><rect x=".5" y=".5" width="35" height="36" rx="4" fill="#6a3323" stroke="rgba(255,255,255,.16)" stroke-width="1"/><rect x="1" y="1" width="34" height="12" rx="3.500" fill="url(#tgloss)"/><path d="M5 10.500C10 2.500 26 2.500 31.500 10.500" stroke="#2edb3c" stroke-width="2" fill="none"/><path d="M8 17.500C12 9 24 9 28.500 17.500" stroke="#2edb3c" stroke-width="2" fill="none"/><ellipse cx="18" cy="24" rx="13" ry="7.500" fill="url(#spk)" stroke="#777" stroke-width=".6"/><ellipse cx="18" cy="25" rx="6" ry="3.300" fill="#5e5e5e"/><ellipse cx="18" cy="31" rx="5" ry="2" fill="#8a8a8a"/></svg>
<svg style="left:6px;top:631px" width="36" height="37" viewBox="0 0 36 37"><rect x=".5" y=".5" width="35" height="36" rx="4" fill="#6a3323" stroke="rgba(255,255,255,.16)" stroke-width="1"/><rect x="1" y="1" width="34" height="12" rx="3.500" fill="url(#tgloss)"/><rect x="4" y="4" width="28.500" height="28" rx="2.500" fill="url(#orsw)"/><path d="M4 24C7 29 14 30.500 19 27 25 23 27 15 22 11.500 18 9 12.500 12 13.500 16.500 14.500 20 19 20 20 17 20 20 15 23 11.500 19.500 7.500 14.500 12 6.500 19.500 7 27 7.500 31.500 16 28 24 26 29 22 32 19 32H6.500Q4 32 4 29.500Z" fill="#4f86c6"/><path d="M21 4h9q2.500 0 2.500 2.500V12C30 8 26 5 21 4Z" fill="#4f86c6"/></svg>
<svg style="left:6px;top:674px" width="36" height="37" viewBox="0 0 36 37"><rect x=".5" y=".5" width="35" height="36" rx="4" fill="#6a3323" stroke="rgba(255,255,255,.16)" stroke-width="1"/><rect x="1" y="1" width="34" height="12" rx="3.500" fill="url(#tgloss)"/><ellipse cx="17" cy="28" rx="7" ry="3.500" fill="#b9c7dc"/><path d="M17.500 3L30.500 9.500 28 23 17 30 6.500 23 4.500 9Z" fill="#f4f6fa"/><path d="M17.500 5L27.500 10 17.500 14.500 7.500 9.500Z" fill="#25406a"/><path d="M6.800 11.500L16 16v11.500L8.500 22Z" fill="#1e3860"/><path d="M28.300 12L19 16.500v11L26 22.500Z" fill="#2c4a78"/></svg>
<svg style="left:6px;top:717px" width="36" height="37" viewBox="0 0 36 37"><rect x=".5" y=".5" width="35" height="36" rx="4" fill="#a39e9d" stroke="rgba(255,255,255,.35)" stroke-width="1"/><rect x="1" y="1" width="34" height="12" rx="3.500" fill="url(#tgloss)"/><rect x="4" y="7" width="28" height="23" rx="1" fill="#e2e2e2" stroke="#6e6e6e" stroke-width=".8"/><rect x="6" y="9" width="24" height="18.500" fill="#2a2a2a"/><path d="M9 12.500l5 3-5 3" stroke="#f0f0f0" stroke-width="1.800" fill="none"/><path d="M15 20.500h5.500" stroke="#f0f0f0" stroke-width="1.800"/></svg>
<svg style="left:6px;top:760px" width="36" height="37" viewBox="0 0 36 37"><rect x=".5" y=".5" width="35" height="36" rx="4" fill="#3cb0ae" stroke="rgba(255,255,255,.25)" stroke-width="1"/><rect x="1" y="1" width="34" height="12" rx="3.500" fill="url(#tgloss)"/><path d="M6 15.500C12 14 18 13.500 23 13.500 26 11.500 29 12.500 31 14 28 15 27 16 25 17.500 23 19.500 21 20 19.500 20.500L20.500 27l2 1.500H17l1-8C15 20 11 18 6 15.500Z" fill="#2a7c86" opacity=".8"/><ellipse cx="17.500" cy="16.500" rx="5.500" ry="2.300" fill="#d8f6f4" opacity=".85"/></svg>
<svg style="left:6px;top:803px" width="36" height="37" viewBox="0 0 36 37"><rect x=".5" y=".5" width="35" height="36" rx="4" fill="#b8b3b2" stroke="rgba(255,255,255,.35)" stroke-width="1"/><rect x="1" y="1" width="34" height="12" rx="3.500" fill="url(#tgloss)"/><path d="M10 8h6.500L10.500 29H4Z" fill="#cc2435" stroke="#7a1a22" stroke-width=".5"/><path d="M19 8h6.500L19.500 29H13Z" fill="#2aa24c" stroke="#1c6a30" stroke-width=".5"/><path d="M28 8h6L28.500 29H22Z" fill="#1c58a8" stroke="#123868" stroke-width=".5"/></svg>
<svg style="left:6px;top:846px" width="36" height="37" viewBox="0 0 36 37"><rect x=".5" y=".5" width="35" height="36" rx="4" fill="#ab8a3e" stroke="rgba(255,255,255,.12)" stroke-width="1"/><rect x="1" y="1" width="34" height="12" rx="3.500" fill="url(#tgloss)"/><path d="M3 8.500L20.500 3.500 26.500 23 8.500 27.500Z" fill="#f7f7f5" stroke="#cfcfcf" stroke-width=".5"/><path d="M6 11L19.500 7l4 13L9.500 24Z" fill="#8aac5c"/><circle cx="10.500" cy="14" r="2.500" fill="#fff"/><circle cx="10.500" cy="14" r="1" fill="#f0a020"/><circle cx="20" cy="18.500" r="8" fill="#dfe8f2" opacity=".75" stroke="#6a6a6a" stroke-width="1.700"/><circle cx="18" cy="15" r="2" fill="#fff"/><circle cx="16" cy="14" r="1.100" fill="#f0a020"/><path d="M26 25l6.500 6.500" stroke="#e89a30" stroke-width="2.600" stroke-linecap="round"/></svg>
<svg style="left:6px;top:889px" width="36" height="37" viewBox="0 0 36 37"><rect x=".5" y=".5" width="35" height="36" rx="4" fill="#b8443f" stroke="rgba(255,255,255,.2)" stroke-width="1"/><rect x="1" y="1" width="34" height="12" rx="3.500" fill="url(#tgloss)"/><rect x="7.500" y="5" width="21.500" height="3.600" rx="1.800" fill="#ee5a5a" stroke="#d93a3a" stroke-width=".5"/><path d="M7.500 14h21l4.500 15.500q0 2-2 2H5q-2 0-2-2Z" fill="#e4e4e0" stroke="#6c6c66" stroke-width=".8"/><path d="M9.500 16.500h17L29 26H7Z" fill="#fdfdfd"/><path d="M3.500 29.500h29v1.500q0 1.500-1.500 1.500H5q-1.500 0-1.500-1.500Z" fill="#9c9c96"/><path d="M15.500 3.500h5.500v17h-5.500Z" fill="#c9c9c9" stroke="#eee" stroke-width=".5"/><path d="M18.200 4v16" stroke="#8c8c8c" stroke-width="2"/><path d="M12 22.500h12.500L18.200 28Z" fill="#1c1c1c"/></svg>
<svg style="left:6px;top:932px" width="36" height="37" viewBox="0 0 36 37"><rect x=".5" y=".5" width="35" height="36" rx="4" fill="#6a3323" stroke="rgba(255,255,255,.16)" stroke-width="1"/><rect x="1" y="1" width="34" height="12" rx="3.500" fill="url(#tgloss)"/><rect x="3" y="6.500" width="30" height="24" rx="1.200" fill="url(#purp)"/><rect x="3" y="6.500" width="30" height="3.800" rx="1" fill="#ecebd8" stroke="#80804c" stroke-width=".4"/><path d="M6 13.500h3l1 1v3.500H6Z" fill="#eee"/><path d="M6 20.500h3l1 1v3.500H6Z" fill="#eee"/></svg>
<svg style="left:6px;top:975px" width="36" height="37" viewBox="0 0 36 37"><rect x=".5" y=".5" width="35" height="36" rx="4" fill="#5f291a" stroke="rgba(255,255,255,.16)" stroke-width="1"/><rect x="1" y="1" width="34" height="12" rx="3.500" fill="url(#tgloss)"/><rect x="19" y="19" width="16" height="17" fill="#4a2a3a" opacity=".6"/><path d="M18.500 2V35M2 18.500H34" stroke="#b98a7a" stroke-width=".8" opacity=".8"/><rect x="21" y="22" width="7" height="5" fill="#5a4858" stroke="#8c8088" stroke-width="1"/><rect x="24" y="25" width="7.500" height="5" fill="#5e4860" stroke="#fff" stroke-width="1.200"/></svg>
<svg style="left:6px;top:1157px" width="36" height="37" viewBox="0 0 36 37"><rect x=".5" y=".5" width="35" height="36" rx="4" fill="#6a3323" stroke="rgba(255,255,255,.16)" stroke-width="1"/><rect x="1" y="1" width="34" height="12" rx="3.500" fill="url(#tgloss)"/><path d="M8 8h20l-1.500 23q-8.500 2-17 0Z" fill="#c9c9c9" opacity=".35" stroke="#d8d8d8" stroke-width=".6"/><path d="M10 18c2-2 4-1 5-3 2 1 3-1 5 0 1 2 4 0 5 2 1 2-1 3 0 5 1 2-1 3 0 5-1 2-3 1-5 2-2 0-3-1-5 0-2 1-4 0-5-1 0-2 1-3 0-5s1-3 0-5Z" fill="#f2f2f2"/><ellipse cx="18" cy="7" rx="11.500" ry="2.800" fill="#cfcfcf" stroke="#f4f4f4" stroke-width="1"/><ellipse cx="18" cy="7" rx="9" ry="1.500" fill="#7c6a64"/></svg>
<svg style="left:0;top:86.5px" width="5" height="8"><path d="M0 .5L3.500 4 0 7.500" fill="none" stroke="#d8d0cc" stroke-width="1"/></svg>
<svg style="left:0;top:172.5px" width="5" height="8"><path d="M0 .5L3.500 4 0 7.500" fill="none" stroke="#d8d0cc" stroke-width="1"/></svg>
<svg style="left:0;top:301.5px" width="5" height="8"><path d="M0 .5L3.500 4 0 7.500" fill="none" stroke="#d8d0cc" stroke-width="1"/></svg>
<svg style="left:0;top:387.5px" width="5" height="8"><path d="M0 .5L3.500 4 0 7.500" fill="none" stroke="#d8d0cc" stroke-width="1"/></svg>
<svg style="left:0;top:430.5px" width="5" height="8"><path d="M0 .5L3.500 4 0 7.500" fill="none" stroke="#d8d0cc" stroke-width="1"/></svg>
<svg style="left:0;top:516.5px" width="5" height="8"><path d="M0 .5L3.500 4 0 7.500" fill="none" stroke="#d8d0cc" stroke-width="1"/></svg>
<svg style="left:0;top:559.5px" width="5" height="8"><path d="M0 .5L3.500 4 0 7.500" fill="none" stroke="#d8d0cc" stroke-width="1"/></svg>
<svg style="left:0;top:731.5px" width="5" height="8"><path d="M0 0L4 4 0 8Z" fill="#e6e0dc"/></svg>
<svg style="left:0;top:774.5px" width="5" height="8"><path d="M0 0L4 4 0 8Z" fill="#e6e0dc"/></svg>
<svg style="left:0;top:817.5px" width="5" height="8"><path d="M0 0L4 4 0 8Z" fill="#e6e0dc"/></svg>
<svg style="left:0;top:860.5px" width="5" height="8"><path d="M0 .5L3.500 4 0 7.500" fill="none" stroke="#d8d0cc" stroke-width="1"/></svg>
<svg style="left:0;top:903.5px" width="5" height="8"><path d="M0 .5L3.500 4 0 7.500" fill="none" stroke="#d8d0cc" stroke-width="1"/></svg>
<svg style="left:43px;top:774.5px" width="5" height="8"><path d="M5 0L1 4 5 8Z" fill="#e6e0dc"/></svg><svg width="0" height="0" style="left:0;top:0"><defs><pattern id="gripp" width="6" height="3" patternUnits="userSpaceOnUse"><rect x="0" y="0" width="2" height="1.6" fill="#8a8a8a"/><rect x="3" y="1.4" width="2" height="1.6" fill="#8a8a8a"/></pattern></defs></svg>
<svg style="left:64px;top:50px" width="24" height="24" viewBox="0 0 24 24"><defs><linearGradient id="ndg" x1="0" y1="0" x2="0" y2="1"><stop offset="0" stop-color="#fff"/><stop offset="1" stop-color="#8fb2f0"/></linearGradient></defs><path d="M5.500 3.500h8.500l4.500 4.500v13h-13Z" fill="url(#ndg)" stroke="#1a1a1a" stroke-width="1.300" stroke-linejoin="round"/><path d="M13.500 4v4.500h4.500" fill="none" stroke="#6a86c0" stroke-width="1"/></svg>
<svg style="left:95px;top:50px" width="24" height="24" viewBox="0 0 24 24"><defs><linearGradient id="ofg" x1="0" y1="0" x2="0" y2="1"><stop offset="0" stop-color="#f0cf8e"/><stop offset="1" stop-color="#c08a2c"/></linearGradient></defs><path d="M3 20V5q0-1 1-1h6l2 2.500h7q1 0 1 1V20Z" fill="#e8c074" stroke="#b98a3c" stroke-width=".8"/><path d="M3.500 20.500l2-10.500h16l-1.500 10.500Z" fill="url(#ofg)" stroke="#a9782a" stroke-width=".8"/></svg>
<svg style="left:126px;top:50px" width="24" height="24" viewBox="0 0 24 24"><rect x="3" y="3" width="18" height="18" rx="1" fill="#4a78c0" stroke="#2a4a80" stroke-width="1"/><rect x="6" y="3.500" width="12" height="9" fill="#f4f7fd"/><path d="M7 5.500h10M7 7.500h10M7 9.500h10" stroke="#7a9ad4" stroke-width=".9"/><rect x="7.500" y="14.500" width="9.500" height="6" fill="#dbe2ee"/><rect x="9" y="15.500" width="2.600" height="4" fill="#1c1c2c"/></svg>
<svg style="left:157px;top:50px" width="24" height="24" viewBox="0 0 24 24"><path d="M5 5.500C8 7 10.500 9 12 11 14 8 16.500 6 19 4.500l1.500 2C17.500 8.500 15.500 10.500 14 13c1.500 2 3.500 4 6 5.500l-1.500 2.500C16 19.500 13.500 17.500 12 15 10.500 17.500 8 19.500 5.500 21L4 18.500C6.500 17 8.500 15 10 13 8.500 11 6.500 9 3.500 7.500Z" fill="#cf4656" stroke="#5c1822" stroke-width="1" stroke-linejoin="round"/></svg>
<svg style="left:194px;top:50px" width="24" height="24" viewBox="0 0 24 24"><path d="M4 3.500h8l2.500 2.500v11H4Z" fill="#f2f2f2" stroke="#9a9a9a" stroke-width="1"/><path d="M5.500 7h7M5.500 9h7M5.500 11h7M5.500 13h7" stroke="#bdbdbd" stroke-width=".8"/><path d="M9.500 7.500h8l2.500 2.500v11h-10.500Z" fill="#f6f6f6" stroke="#8e8e8e" stroke-width="1"/><path d="M11 11.500h7.500M11 13.500h7.500M11 15.500h7.500M11 17.500h7.500" stroke="#b5b5b5" stroke-width=".8"/></svg>
<svg style="left:225px;top:50px" width="24" height="24" viewBox="0 0 24 24"><rect x="3" y="5" width="15" height="15.500" rx="1" fill="#9a9a9a" stroke="#777" stroke-width="1"/><path d="M7.500 6.500q0-3.500 3-3.500t3 3.500Z" fill="#c4c4c4" stroke="#777" stroke-width=".8"/><path d="M6 12q2-4 5-3l-.5-1.500 4 2.500-3.500 2.500.3-1.500q-2.500-.5-5.300 1Z" fill="#dcdcdc" stroke="#8a8a8a" stroke-width=".5"/><path d="M11 10.500h7l2.500 2.500v8.500H11Z" fill="#f4f4f4" stroke="#8e8e8e" stroke-width="1"/><path d="M12.500 14.500h6.500M12.500 16.500h6.500M12.500 18.500h6.500" stroke="#b5b5b5" stroke-width=".8"/></svg>
<svg style="left:53px;top:49px" width="6" height="26"><rect width="6" height="26" fill="url(#gripp)"/></svg>
<div class="a sep" style="left:188px;top:49px;height:25px"></div><div class="a" style="left:189px;top:49px;height:25px;width:1px;background:#fff"></div>
<svg style="left:259px;top:49px" width="6" height="26"><rect width="6" height="26" fill="url(#gripp)"/></svg>
<div class="a" style="left:267px;top:49px;width:131px;height:22px;box-sizing:border-box;border-bottom:1px solid #3a3a3a;border-left:1px solid #c4c4c4;border-top:1px solid #c8c8c8;background:linear-gradient(#cdcdcd,#ececec 28%,#fdfdfd 55%,#fff);"></div>
<div class="a" style="left:377px;top:50px;width:21px;height:20px;box-sizing:border-box;border-left:1px solid #e8e8e8;border-right:1px solid #555;background:linear-gradient(#f8f8f8,#e0e0e0 45%,#b4b4b4);"></div>
<svg style="left:380px;top:52px" width="15" height="16"><defs><linearGradient id="cbar" x1="0" y1="0" x2="0" y2="1"><stop offset="0" stop-color="#6a6a6a"/><stop offset="1" stop-color="#1c1c1c"/></linearGradient></defs><path d="M5 1.500h5v6h3.500L7.500 14 1.500 7.500H5Z" fill="url(#cbar)" stroke="#111" stroke-width=".7"/></svg>
<svg style="left:269px;top:52px" width="16" height="16" viewBox="0 0 24 24"><defs><radialGradient id="gmg2" cx="45%" cy="30%"><stop offset="0" stop-color="#d4e6f8"/><stop offset=".5" stop-color="#7ea6d4"/><stop offset="1" stop-color="#2c4c78"/></radialGradient></defs><path d="M2.500 8C2.500 4.500 7 4 9.500 6.500L12 8.500 14.500 6.500C17 4 21.500 4.500 21.500 8V16.500C21.500 20.500 17.500 21.500 15 19L12 17 9 19C6.500 21.500 2.500 20.500 2.500 16.500Z" fill="#000" opacity=".35" transform="translate(1.300 1.500)"/><path d="M2.500 8C2.500 4.500 7 4 9.500 6.500L12 8.500 14.500 6.500C17 4 21.500 4.500 21.500 8V16.500C21.500 20.500 17.500 21.500 15 19L12 17 9 19C6.500 21.500 2.500 20.500 2.500 16.500Z" fill="url(#gmg2)" stroke="#2c4a6c" stroke-width=".9"/><ellipse cx="6.800" cy="17" rx="3" ry="2.600" fill="#4cc4da" opacity=".9"/><ellipse cx="17.200" cy="17" rx="3" ry="2.600" fill="#4cc4da" opacity=".9"/><ellipse cx="7.500" cy="8.500" rx="2.600" ry="1.800" fill="#fff" opacity=".55"/><ellipse cx="16" cy="8.500" rx="2.600" ry="1.800" fill="#fff" opacity=".45"/></svg>
<div class="t " style="left:287.6px;top:53px;font-size:13.5px;color:#000;transform:scaleX(1.0088);transform-origin:0 0;-webkit-text-stroke:.1px;">Geometry</div>
<div class="a" style="left:399px;top:47px;width:31px;height:31px;box-sizing:border-box;border-left:1px solid #222;border-top:1px solid #222;background:linear-gradient(#c9c9c9,#e6e6e6 45%,#f7f7f7);"></div>
<svg style="left:405px;top:54.5px" width="20" height="20" viewBox="0 0 24 24"><defs><radialGradient id="gmg" cx="45%" cy="30%"><stop offset="0" stop-color="#d4e6f8"/><stop offset=".5" stop-color="#7ea6d4"/><stop offset="1" stop-color="#2c4c78"/></radialGradient></defs><path d="M2.500 8C2.500 4.500 7 4 9.500 6.500L12 8.500 14.500 6.500C17 4 21.500 4.500 21.500 8V16.500C21.500 20.500 17.500 21.500 15 19L12 17 9 19C6.500 21.500 2.500 20.500 2.500 16.500Z" fill="#000" opacity=".35" transform="translate(1.300 1.500)"/><path d="M2.500 8C2.500 4.500 7 4 9.500 6.500L12 8.500 14.500 6.500C17 4 21.500 4.500 21.500 8V16.500C21.500 20.500 17.500 21.500 15 19L12 17 9 19C6.500 21.500 2.500 20.500 2.500 16.500Z" fill="url(#gmg)" stroke="#2c4a6c" stroke-width=".9"/><ellipse cx="6.800" cy="17" rx="3" ry="2.600" fill="#4cc4da" opacity=".9"/><ellipse cx="17.200" cy="17" rx="3" ry="2.600" fill="#4cc4da" opacity=".9"/><ellipse cx="7.500" cy="8.500" rx="2.600" ry="1.800" fill="#fff" opacity=".55"/><ellipse cx="16" cy="8.500" rx="2.600" ry="1.800" fill="#fff" opacity=".45"/></svg>
<svg style="left:434px;top:50px" width="24" height="24" viewBox="0 0 24 24"><path d="M5 17.500q-2.500-4 2-6 .5-5 5-5.500 4.500.5 5 5.500 5 1 2.500 6-3 2.500-7.500 0-4.500 2.500-7 0Z" fill="#b4b4b4" stroke="#8a8a8a" stroke-width=".8"/><ellipse cx="12" cy="9" rx="3.500" ry="2.500" fill="#d6d6d6"/><ellipse cx="7.500" cy="16" rx="3" ry="2" fill="#cfcfcf"/><ellipse cx="16.500" cy="16" rx="3" ry="2" fill="#c8c8c8"/></svg>
<svg style="left:465px;top:50px" width="24" height="24" viewBox="0 0 24 24"><path d="M5 4l13-1q1.500 0 1.500 1.500l-1 15q0 1.500-1.500 1.500l-8 .5Z" fill="#cfcfcf" stroke="#8e8e8e" stroke-width=".9"/><path d="M7.500 6l9.500-.7-.3 4-8 .7Z" fill="#efefef" stroke="#aaa" stroke-width=".5"/><rect x="10.0" y="12.0" width="1.800" height="1.500" fill="#a4a4a4"/><rect x="12.7" y="12.0" width="1.800" height="1.500" fill="#a4a4a4"/><rect x="15.4" y="12.0" width="1.800" height="1.500" fill="#a4a4a4"/><rect x="9.85" y="14.4" width="1.800" height="1.500" fill="#a4a4a4"/><rect x="12.549999999999999" y="14.4" width="1.800" height="1.500" fill="#a4a4a4"/><rect x="15.25" y="14.4" width="1.800" height="1.500" fill="#a4a4a4"/><rect x="9.7" y="16.8" width="1.800" height="1.500" fill="#a4a4a4"/><rect x="12.399999999999999" y="16.8" width="1.800" height="1.500" fill="#a4a4a4"/><rect x="15.1" y="16.8" width="1.800" height="1.500" fill="#a4a4a4"/></svg>
<svg style="left:496px;top:50px" width="24" height="24" viewBox="0 0 24 24"><path d="M7 5v16" stroke="#222" stroke-width="1.200"/><rect x="3.500" y="4" width="8" height="2.600" fill="#333"/><rect x="12.500" y="4.500" width="8" height="2.600" fill="#2f8fe0" stroke="#234" stroke-width=".5"/><rect x="6" y="8" width="9" height="2.600" fill="#2f8fe0" stroke="#234" stroke-width=".5"/><rect x="14" y="8.500" width="7" height="2.600" fill="#d84050" stroke="#422" stroke-width=".5"/><rect x="4" y="12" width="7" height="2.600" fill="#d84050" stroke="#422" stroke-width=".5"/><rect x="10" y="12.500" width="4" height="2.600" fill="#333"/><rect x="5" y="16" width="9" height="2.600" fill="#333"/><rect x="5" y="16" width="4" height="2.600" fill="#2f8fe0"/></svg>
<svg style="left:526px;top:50px" width="24" height="24" viewBox="0 0 24 24"><path d="M7 5.500h5L7.500 19h-5Z" fill="#e01828"/><path d="M13.500 5.500h5L14 19H9Z" fill="#1eb43c"/><path d="M20 5.500h3.500L19.500 19h-4Z" fill="#1c50d8"/></svg>
<svg style="left:557px;top:50px" width="24" height="24" viewBox="0 0 24 24"><g fill="none" stroke="#5cb848" stroke-width="1.700" stroke-linejoin="round"><path d="M4 8.500l9-4.500 7.500 3.500v10L12 21.500 4 18Z"/><path d="M4 8.500l8 3.500 8.500-4.500M12 12v9.500"/><path d="M13 4v9.500l7.500 4M13 13.500L4 18" stroke-width="1.100"/></g></svg>
<svg style="left:588px;top:50px" width="24" height="24" viewBox="0 0 24 24"><defs><radialGradient id="glg" cx="40%" cy="30%"><stop offset="0" stop-color="#cfe4ff"/><stop offset=".5" stop-color="#4a88e0"/><stop offset="1" stop-color="#143c9c"/></radialGradient></defs><ellipse cx="12" cy="21.500" rx="7" ry="1.300" fill="#000" opacity=".18"/><circle cx="12" cy="11.500" r="9" fill="url(#glg)"/><circle cx="9" cy="9" r=".8" fill="#fff"/><circle cx="14" cy="7.500" r=".8" fill="#fff"/><circle cx="15.500" cy="13" r=".8" fill="#fff"/><circle cx="10" cy="14.500" r=".8" fill="#fff"/><path d="M9 9l5-1.500 1.500 5.500-5.500 1.500Z" stroke="#dbe8ff" stroke-width=".4" fill="none"/></svg>
<svg style="left:618px;top:50px" width="24" height="24" viewBox="0 0 24 24"><g fill="#f01818"><path d="M8 10.500h9q2 0 2 1.500t-2 1.500H8Q5 13.500 3 14.500l1-2.500-1-2.500Q5 10.500 8 10.500Z"/><path d="M16 10.500q2-3.500 5-3.500l2-1.500-.5 2.500-2.500 1 2 .5L21 11q-2-1.500-4 .5Z"/><path d="M16 13.500q2 3.500 5 3.500l2 1.500-.5-2.500-2.500-1 2-.5L21 13q-2 1.500-4-.5Z"/><path d="M9 10.500L7.500 8M11 10.500L10 7.500M13 10.500l-.5-3M9 13.500L7.500 16M11 13.500l-1 3M13 13.500l-.5 3" stroke="#f01818" stroke-width=".9"/></g></svg>
<svg style="left:53px;top:83px" width="6" height="26"><rect width="6" height="26" fill="url(#gripp)"/></svg>
<svg style="left:64px;top:84px" width="24" height="24" viewBox="0 0 24 24"><path d="M11.500 9.500v5M9 12h5" stroke="#3a5a98" stroke-width="1.100"/><path d="M12.500 10.500v5M10 13h5" stroke="#000" stroke-width="1" opacity=".15"/></svg>
<svg style="left:95px;top:84px" width="24" height="24" viewBox="0 0 24 24"><path d="M4.500 19L19.500 5" stroke="#3c70ab" stroke-width="1.200" fill="none"/><rect x="4.2" y="16.7" width="2.6" height="2.6" fill="#10151f" transform="rotate(45 5.5 18)"/><rect x="17.2" y="4.7" width="2.6" height="2.6" fill="#10151f" transform="rotate(45 18.5 6)"/></svg>
<svg style="left:126px;top:84px" width="24" height="24" viewBox="0 0 24 24"><circle cx="12" cy="12" r="8" stroke="#3c70ab" stroke-width="1.200" fill="none"/><path d="M12 9v5.500M9.300 11.700h5.500" stroke="#111" stroke-width="1.200"/></svg>
<svg style="left:157px;top:84px" width="24" height="24" viewBox="0 0 24 24"><ellipse cx="12" cy="15.500" rx="8.500" ry="3.800" stroke="#3c70ab" stroke-width="1.200" fill="none"/><path d="M12 6v11" stroke="#111" stroke-width="1.100"/><path d="M10 8.500l2-3 2 3" fill="none" stroke="#111" stroke-width="1"/><path d="M10.500 15l1.500 2.500 1.500-2.500" fill="none" stroke="#111" stroke-width="1"/></svg>
<svg style="left:188px;top:84px" width="24" height="24" viewBox="0 0 24 24"><path d="M4.500 9.500C8 3 18 4.500 19.500 11 20 15 18.500 17.500 17 19" stroke="#3c70ab" stroke-width="1.200" fill="none"/><rect x="3.2" y="8.7" width="2.6" height="2.6" fill="#10151f" transform="rotate(45 4.5 10)"/><rect x="14.7" y="4.2" width="2.6" height="2.6" fill="#10151f" transform="rotate(45 16 5.5)"/><rect x="15.7" y="17.7" width="2.6" height="2.6" fill="#10151f" transform="rotate(45 17 19)"/><rect x="11.300" y="12.300" width="1.200" height="1.200" fill="#222"/></svg>
<svg style="left:219px;top:84px" width="24" height="24" viewBox="0 0 24 24"><path d="M4 13.500C6 5 9.500 4 12 12S17.500 21.500 20.500 12.500" stroke="#3c70ab" stroke-width="1.200" fill="none"/><rect x="2.7" y="11.7" width="2.6" height="2.6" fill="#10151f" transform="rotate(45 4 13)"/><rect x="6.7" y="5.2" width="2.6" height="2.6" fill="#10151f" transform="rotate(45 8 6.5)"/><rect x="14.7" y="17.2" width="2.6" height="2.6" fill="#10151f" transform="rotate(45 16 18.5)"/><rect x="19.2" y="11.2" width="2.6" height="2.6" fill="#10151f" transform="rotate(45 20.5 12.5)"/></svg>
<svg style="left:250px;top:84px" width="24" height="24" viewBox="0 0 24 24"><path d="M4.500 19L19.500 5" stroke="#3c70ab" stroke-width="1.200" fill="none"/><path d="M15 6l5-1.500L18.500 9.500" fill="none" stroke="#3c70ab" stroke-width="1.100"/><rect x="4.2" y="16.7" width="2.6" height="2.6" fill="#10151f" transform="rotate(45 5.5 18)"/><rect x="17.0" y="5.5" width="2.0" height="2.0" fill="#10151f" transform="rotate(45 18 6.5)"/></svg>
<svg style="left:281px;top:84px" width="24" height="24" viewBox="0 0 24 24"><path d="M5 6l3 10.500 6 2.500 4-6 1-7Q12 10.500 5 6Z" stroke="#3c70ab" stroke-width="1.200" fill="none"/><rect x="3.7" y="4.7" width="2.6" height="2.6" fill="#10151f" transform="rotate(45 5 6)"/><rect x="6.7" y="15.2" width="2.6" height="2.6" fill="#10151f" transform="rotate(45 8 16.5)"/><rect x="12.7" y="17.7" width="2.6" height="2.6" fill="#10151f" transform="rotate(45 14 19)"/><rect x="17.7" y="4.7" width="2.6" height="2.6" fill="#10151f" transform="rotate(45 19 6)"/></svg>
<svg style="left:312px;top:84px" width="24" height="24" viewBox="0 0 24 24"><path d="M4 13l5-6.500 9 7.500 1 5.500" stroke="#3c70ab" stroke-width="1.200" fill="none"/><rect x="2.7" y="11.7" width="2.6" height="2.6" fill="#10151f" transform="rotate(45 4 13)"/><rect x="7.7" y="5.2" width="2.6" height="2.6" fill="#10151f" transform="rotate(45 9 6.5)"/><rect x="16.7" y="12.7" width="2.6" height="2.6" fill="#10151f" transform="rotate(45 18 14)"/><rect x="17.7" y="18.2" width="2.6" height="2.6" fill="#10151f" transform="rotate(45 19 19.5)"/></svg>
<svg style="left:343px;top:84px" width="24" height="24" viewBox="0 0 24 24"><path d="M6 14.500L14.500 4 19.500 8 11 19Z M7 9l12 4-2 7L4.500 15.500Z" stroke="#3c70ab" stroke-width="1.200" fill="none"/><rect x="13.2" y="2.7" width="2.6" height="2.6" fill="#10151f" transform="rotate(45 14.5 4)"/><rect x="18.2" y="6.7" width="2.6" height="2.6" fill="#10151f" transform="rotate(45 19.5 8)"/><rect x="9.7" y="18.2" width="2.6" height="2.6" fill="#10151f" transform="rotate(45 11 19.5)"/><rect x="4.7" y="13.2" width="2.6" height="2.6" fill="#10151f" transform="rotate(45 6 14.5)"/><rect x="5.7" y="7.7" width="2.6" height="2.6" fill="#10151f" transform="rotate(45 7 9)"/><rect x="15.7" y="18.7" width="2.6" height="2.6" fill="#10151f" transform="rotate(45 17 20)"/></svg>
<svg style="left:374px;top:84px" width="24" height="24" viewBox="0 0 24 24"><ellipse cx="13" cy="21" rx="9" ry="1.600" fill="#000" opacity=".18"/><path d="M3 17C8 14 9 7 13 4.500l7 2.500C16 9.500 16 17 10.500 20.500Z" fill="#3c70ab" stroke="#1a3050" stroke-width="1"/><path d="M6.500 18.500C11 15.500 12.500 8.500 16.500 5.700" stroke="#e8141c" stroke-width="1.500" fill="none"/><path d="M4.500 17.500C9 14.500 10.500 8 14.500 5" stroke="#9cc0ea" stroke-width=".7" fill="none"/></svg>
<svg style="left:405px;top:84px" width="24" height="24" viewBox="0 0 24 24"><rect x="2.500" y="3" width="18.500" height="18.500" fill="#3c70ab" stroke="#e8141c" stroke-width="1.500"/><path d="M2.500 3l6 6M21 3l-6 6M2.500 21.500l6-6M21 21.500l-6-6" stroke="#e8141c" stroke-width="1"/><rect x="8" y="8.500" width="7.500" height="7.500" fill="#5a8cc6" stroke="#0e1a2c" stroke-width="1.300"/></svg>
<svg style="left:436px;top:84px" width="24" height="24" viewBox="0 0 24 24"><path d="M3 19.500l6-5.500h12.500l-6 5.500Z" fill="#3c70ab" stroke="#1a3050" stroke-width="1"/><path d="M12 4.500V17" stroke="#111" stroke-width="1.100"/><path d="M10.300 7.500l1.700-3.500 1.700 3.500Z" fill="#111"/><path d="M3.500 20.500h12l6-5.500" stroke="#000" stroke-width="1" opacity=".25" fill="none"/></svg>
<svg style="left:467px;top:84px" width="24" height="24" viewBox="0 0 24 24"><path d="M10 3.500V15h11.500M10 15l-6 5.500" stroke="#3c70ab" stroke-width="1.200" fill="none"/><path d="M8.500 6l1.500-3 1.500 3M18.500 13.500l3 1.500-3 1.500M4 17.500v3h3" stroke="#3c70ab" stroke-width="1" fill="none"/><path d="M3.500 3.500h3l-3 4h3" stroke="#111" stroke-width="1" fill="none"/><path d="M16 8l4 4.500M20 8l-4 4.500" stroke="#111" stroke-width="1"/><path d="M9 18l1.500 2 1.500-2M10.500 20v2.500" stroke="#111" stroke-width="1" fill="none"/></svg>
<svg style="left:498px;top:84px" width="24" height="24" viewBox="0 0 24 24"><path d="M7 18V4.500M7 18h14M7 18L17.500 7" stroke="#e8141c" stroke-width="1.200" fill="none"/><path d="M5 7.500l2-3.500 2 3.500ZM18 16l3.500 2-3.500 2ZM14.500 7.500l3.500-1-1 3.500Z" fill="#e8141c"/><path d="M4.500 15.500l5 5M9.500 15.500l-5 5M7 14.500v7M3.500 18h7" stroke="#111" stroke-width="1"/></svg>
<svg style="left:532px;top:83px" width="6" height="26"><rect width="6" height="26" fill="url(#gripp)"/></svg>
<svg style="left:543px;top:84px" width="24" height="24" viewBox="0 0 24 24"><ellipse cx="13" cy="21" rx="9" ry="1.600" fill="#000" opacity=".18"/><path d="M3.5 8l4.5 -4.5h12.5l-4.5 4.5Z" fill="#6fa0d6" stroke="#1a3050" stroke-width="1" stroke-linejoin="round"/><path d="M16.0 8l4.5 -4.5v12.5l-4.5 4.5Z" fill="#2a5487" stroke="#1a3050" stroke-width="1" stroke-linejoin="round"/><rect x="3.5" y="8" width="12.5" height="12.5" fill="#3c70ab" stroke="#1a3050" stroke-width="1"/></svg>
<svg style="left:574px;top:84px" width="24" height="24" viewBox="0 0 24 24"><ellipse cx="13" cy="21" rx="9" ry="1.600" fill="#000" opacity=".18"/><path d="M5 6.500v12q0 2.500 6.500 2.500t6.500-2.500v-12Z" fill="#3c70ab" stroke="#1a3050" stroke-width="1"/><ellipse cx="11.500" cy="6.500" rx="6.500" ry="2.500" fill="#6fa0d6" stroke="#1a3050" stroke-width="1"/><path d="M15.500 8.800v12" stroke="#2a5487" stroke-width="2.500" opacity=".5"/></svg>
<svg style="left:605px;top:84px" width="24" height="24" viewBox="0 0 24 24"><defs><radialGradient id="spg" cx="40%" cy="30%"><stop offset="0" stop-color="#6a9ad4"/><stop offset=".7" stop-color="#3c70ab"/><stop offset="1" stop-color="#244a7c"/></radialGradient></defs><ellipse cx="13" cy="21" rx="8" ry="1.800" fill="#000" opacity=".25"/><circle cx="12" cy="11.500" r="9" fill="url(#spg)" stroke="#1a3050" stroke-width="1"/></svg>
<svg style="left:636px;top:84px" width="24" height="24" viewBox="0 0 24 24"><ellipse cx="13" cy="15" rx="9.500" ry="5.500" fill="#000" opacity=".2"/><ellipse cx="12" cy="12" rx="9.500" ry="6.300" fill="#3c70ab" stroke="#1a3050" stroke-width="1"/><ellipse cx="12" cy="11.500" rx="4" ry="2.200" fill="#dfe8f4" stroke="#12233c" stroke-width="1.200"/><path d="M3.500 10.500Q12 3 20.500 10.500" stroke="#6fa0d6" stroke-width="1.200" fill="none" opacity=".8"/></svg>
<svg style="left:667px;top:84px" width="24" height="24" viewBox="0 0 24 24"><ellipse cx="13" cy="21" rx="9" ry="1.600" fill="#000" opacity=".18"/><path d="M12 3L19 18.500q0 2.500-7 2.500t-7-2.500Z" fill="#3c70ab" stroke="#1a3050" stroke-width="1"/><path d="M12 4l5 15" stroke="#2a5487" stroke-width="2" opacity=".45"/></svg>
<svg style="left:698px;top:84px" width="24" height="24" viewBox="0 0 24 24"><rect x="6.500" y="6.500" width="14" height="14" fill="#000" opacity=".25"/><rect x="5" y="5" width="14" height="14" fill="#3c70ab" stroke="#1a3050" stroke-width="1"/></svg>
<svg style="left:729px;top:84px" width="24" height="24" viewBox="0 0 24 24"><ellipse cx="13" cy="13.500" rx="9" ry="4.800" fill="#000" opacity=".2"/><ellipse cx="12" cy="12.500" rx="9" ry="4.800" fill="#3c70ab" stroke="#1a3050" stroke-width="1"/></svg>
<svg style="left:760px;top:84px" width="24" height="24" viewBox="0 0 24 24"><path d="M3.500 11.500l14.500 7 2-3-14.500-7Z" fill="#3c70ab" stroke="#1a3050" stroke-width=".8"/><path d="M10.500 12.500l4-9 3 1.300-4 9Z" fill="#3c70ab" stroke="#1a3050" stroke-width=".8"/></svg>
<svg style="left:794px;top:83px" width="6" height="26"><rect width="6" height="26" fill="url(#gripp)"/></svg>
<svg style="left:805px;top:84px" width="24" height="24" viewBox="0 0 24 24"><rect x="4.500" y="4.500" width="11" height="11" fill="#000" opacity=".25"/><rect x="10.500" y="10.500" width="11" height="11" fill="#000" opacity=".25"/><path d="M3 3h11.500v5.500H20.500v12h-12v-5.500H3Z" fill="#3c70ab" stroke="#1a3050" stroke-width="1"/><path d="M8.500 8.500h6v6h-6Z" fill="none" stroke="#1a3050" stroke-width=".7" opacity=".6"/></svg>
<svg style="left:836px;top:84px" width="24" height="24" viewBox="0 0 24 24"><rect x="3" y="3" width="11.500" height="11.500" fill="#dbe6f6" stroke="#1a3050" stroke-width="1"/><rect x="9" y="9" width="11.500" height="11.500" fill="#dbe6f6" stroke="#1a3050" stroke-width="1"/><rect x="9" y="9" width="5.500" height="5.500" fill="#3c70ab" stroke="#1a3050" stroke-width="1"/><path d="M4 15.500h4M21.500 10v11.500H10" stroke="#000" opacity=".3" fill="none"/></svg>
<svg style="left:867px;top:84px" width="24" height="24" viewBox="0 0 24 24"><rect x="3" y="3" width="11.500" height="11.500" fill="#3c70ab" stroke="#1a3050" stroke-width="1"/><rect x="9" y="9" width="11.500" height="11.500" fill="#dbe6f6" stroke="#1a3050" stroke-width="1"/><path d="M21.500 10v11.500H10" stroke="#000" opacity=".3" fill="none"/></svg>
<svg style="left:898px;top:84px" width="24" height="24" viewBox="0 0 24 24"><rect x="3" y="3" width="11.500" height="11.500" fill="#dbe6f6" stroke="#38588a" stroke-width="1"/><rect x="9" y="9" width="11.500" height="11.500" fill="#dbe6f6" stroke="#38588a" stroke-width="1"/><path d="M9 14.500V9h5.500" stroke="#3c70ab" stroke-width="1.600" fill="none"/><path d="M21.500 10v11.500H10" stroke="#000" opacity=".3" fill="none"/></svg>
<svg style="left:932px;top:83px" width="6" height="26"><rect width="6" height="26" fill="url(#gripp)"/></svg>
<svg style="left:942px;top:83px" width="24" height="24" viewBox="0 0 24 24"><rect x="2.500" y="3.500" width="19" height="17.500" fill="#fff" stroke="#111" stroke-width="1.400"/><rect x="5" y="6" width="14" height="10.500" fill="#cfe0f8"/><path d="M5 16.500V12l3-3 2.500 3.500 3-2 2.500 2 3-3v7Z" fill="#3c70ab"/></svg>
<svg style="left:973px;top:83px" width="24" height="24" viewBox="0 0 24 24"><rect x="2.500" y="3.500" width="19" height="17.500" fill="#fff" stroke="#111" stroke-width="1.400"/><rect x="5" y="6" width="14" height="10.500" fill="#cfe0f8"/><path d="M5 16.500V13l3-2 2.500 2.500 3-1.500 2.500 1.500 3-2v5Z" fill="#3c70ab"/><path d="M5 12l3-3 2.500 3 3-2.500 2.500 2 3-3" stroke="#e8141c" stroke-width="1.200" fill="none"/></svg>
<svg style="left:53px;top:117px" width="6" height="26"><rect width="6" height="26" fill="url(#gripp)"/></svg>
<svg style="left:64px;top:118px" width="24" height="24" viewBox="0 0 24 24"><path d="M3 21V17.1Q3 14 6.2 14Q9.5 14 9.5 17.1V21Z" fill="#000" opacity=".3" transform="translate(1.200 1.200)"/><path d="M3 21V17.1Q3 14 6.2 14Q9.5 14 9.5 17.1V21Z" fill="#3c70ab" stroke="#1a3050" stroke-width="1"/><path d="M13.5 11V7.1Q13.5 4 16.8 4Q20.0 4 20.0 7.1V11Z" fill="#000" opacity=".3" transform="translate(1.200 1.200)"/><path d="M13.5 11V7.1Q13.5 4 16.8 4Q20.0 4 20.0 7.1V11Z" fill="#3c70ab" stroke="#1a3050" stroke-width="1"/><path d="M5 13L13 4" stroke="#e8141c" stroke-width="1.100" fill="none"/><path d="M10 4.500l3.500-1-.7 3.600Z" fill="#e8141c"/></svg>
<svg style="left:95px;top:118px" width="24" height="24" viewBox="0 0 24 24"><path d="M2.500 11.500L7 7l4.500 4-4.500 4.500Z" fill="#3c70ab" stroke="#1a3050" stroke-width="1"/><path d="M13.5 21V17.1Q13.5 14 16.8 14Q20.0 14 20.0 17.1V21Z" fill="#000" opacity=".3" transform="translate(1.200 1.200)"/><path d="M13.5 21V17.1Q13.5 14 16.8 14Q20.0 14 20.0 17.1V21Z" fill="#3c70ab" stroke="#1a3050" stroke-width="1"/><path d="M17.500 2.500v6M14.500 5.500h6" stroke="#e8141c" stroke-width="1.300"/></svg>
<svg style="left:126px;top:118px" width="24" height="24" viewBox="0 0 24 24"><path d="M3 11V7.1Q3 4 6.2 4Q9.5 4 9.5 7.1V11Z" fill="#000" opacity=".3" transform="translate(1.200 1.200)"/><path d="M3 11V7.1Q3 4 6.2 4Q9.5 4 9.5 7.1V11Z" fill="#3c70ab" stroke="#1a3050" stroke-width="1"/><path d="M12 21V17.1Q12 14 15.2 14Q18.5 14 18.5 17.1V21Z" fill="#000" opacity=".3" transform="translate(1.200 1.200)"/><path d="M12 21V17.1Q12 14 15.2 14Q18.5 14 18.5 17.1V21Z" fill="#3c70ab" stroke="#1a3050" stroke-width="1"/><path d="M11.500 5v10.500h9M11.500 15.500L6 20" stroke="#e8141c" stroke-width="1.100" fill="none"/><path d="M18.500 13.500l3 2-3 2ZM5 17.500l.3 3.300 3-.8Z" fill="#e8141c"/></svg>
<svg style="left:157px;top:118px" width="24" height="24" viewBox="0 0 24 24"><path d="M9 3h6.500v4.500q0 2.500-3.200 2.500T9 7.500Z" fill="#3c70ab" stroke="#1a3050" stroke-width="1"/><path d="M9 21.5V17.9Q9 15.0 12.2 15.0Q15.5 15.0 15.5 17.9V21.5Z" fill="#000" opacity=".3" transform="translate(1.200 1.200)"/><path d="M9 21.5V17.9Q9 15.0 12.2 15.0Q15.5 15.0 15.5 17.9V21.5Z" fill="#3c70ab" stroke="#1a3050" stroke-width="1"/><path d="M3 12h18.500" stroke="#e8141c" stroke-width="1.300"/></svg>
<svg style="left:188px;top:118px" width="24" height="24" viewBox="0 0 24 24"><path d="M3 21.5V18.2Q3 15.5 5.8 15.5Q8.5 15.5 8.5 18.2V21.5Z" fill="#000" opacity=".3" transform="translate(1.200 1.200)"/><path d="M3 21.5V18.2Q3 15.5 5.8 15.5Q8.5 15.5 8.5 18.2V21.5Z" fill="#3c70ab" stroke="#1a3050" stroke-width="1"/><path d="M11 17.5V11.2Q11 6.0 16.0 6.0Q21 6.0 21 11.2V17.5Z" fill="#000" opacity=".3" transform="translate(1.200 1.200)"/><path d="M11 17.5V11.2Q11 6.0 16.0 6.0Q21 6.0 21 11.2V17.5Z" fill="#3c70ab" stroke="#1a3050" stroke-width="1"/><path d="M5 13l5-5" stroke="#e8141c" stroke-width="1.100" fill="none"/><path d="M7.500 7.500l3.500-.8-.8 3.500Z" fill="#e8141c"/></svg>
<svg style="left:219px;top:118px" width="24" height="24" viewBox="0 0 24 24"><ellipse cx="13" cy="21" rx="9" ry="1.600" fill="#000" opacity=".18"/><path d="M3 16.500C8 14 9.500 8 13 5l8 3C17 11 16.500 17.500 11 21Z" fill="#3c70ab" stroke="#1a3050" stroke-width="1"/><path d="M5 18C10 15 11.500 9 15.500 6M8 19.500C13 16 14 10.500 18.500 7M7 11.500L17 15.500" stroke="#e8141c" stroke-width=".8" fill="none" stroke-dasharray="2 1"/><path d="M4 3l7 8" stroke="#e8141c" stroke-width="1.100" fill="none"/><path d="M3 2.500l3.500.8-2.500 2.500Z" fill="#e8141c"/></svg>
<svg style="left:250px;top:118px" width="24" height="24" viewBox="0 0 24 24"><ellipse cx="13" cy="21" rx="9" ry="1.600" fill="#000" opacity=".18"/><path d="M3 15.500C8 13 9.500 8 13 5l8 3C17 11 16.500 17.500 11 21Z" fill="#3c70ab" stroke="#1a3050" stroke-width="1"/><path d="M4 12C7 9 8.500 6 11.500 3.500l2.500 1C11 7 9.500 10 6 13.500Z" fill="#f2f2f2" stroke="#777" stroke-width=".5"/><path d="M4.500 11.500C8 8.500 9 6 12 3.500M8 17.500C12 15 13.500 10 17.500 7" stroke="#e8141c" stroke-width="1.300" fill="none"/></svg>
<svg style="left:281px;top:118px" width="24" height="24" viewBox="0 0 24 24"><path d="M3.500 19.500C9 18 9.500 13 12 11S17 6.500 20.500 4.500" stroke="#3c70ab" stroke-width="2.200" fill="none"/><path d="M3.500 19.500C9 18 9.500 13 12 11" stroke="#e8141c" stroke-width="1" fill="none"/><path d="M15 8.500L20.500 4.500" stroke="#e8141c" stroke-width="1"/></svg>
<svg style="left:312px;top:118px" width="24" height="24" viewBox="0 0 24 24"><ellipse cx="13" cy="21" rx="9" ry="1.600" fill="#000" opacity=".18"/><path d="M5 6.500v12q0 2.500 7 2.500t7-2.500v-12Z" fill="#3c70ab" stroke="#1a3050" stroke-width="1"/><ellipse cx="12" cy="6.500" rx="7" ry="2.500" fill="#6fa0d6" stroke="#1a3050" stroke-width="1"/><path d="M5.500 16.500q6.500 3 13 0v2q-6.500 3-13 0Z" fill="#e8141c"/><rect x="10.700" y="9" width="2.600" height="9" fill="#e8141c"/></svg>
<div class="a sep" style="left:343px;top:117px;height:25px"></div><div class="a" style="left:344px;top:117px;height:25px;width:1px;background:#fff"></div>
<svg style="left:349px;top:118px" width="24" height="24" viewBox="0 0 24 24"><path d="M2.5 21.5V18.5Q2.5 16.0 5.0 16.0Q7.5 16.0 7.5 18.5V21.5Z" fill="#000" opacity=".3" transform="translate(1.200 1.200)"/><path d="M2.5 21.5V18.5Q2.5 16.0 5.0 16.0Q7.5 16.0 7.5 18.5V21.5Z" fill="#3c70ab" stroke="#1a3050" stroke-width="1"/><path d="M8 15.5V12.5Q8 10.0 10.5 10.0Q13 10.0 13 12.5V15.5Z" fill="#000" opacity=".3" transform="translate(1.200 1.200)"/><path d="M8 15.5V12.5Q8 10.0 10.5 10.0Q13 10.0 13 12.5V15.5Z" fill="#3c70ab" stroke="#1a3050" stroke-width="1"/><path d="M14.5 9.5V5.9Q14.5 3.0 17.5 3.0Q20.5 3.0 20.5 5.9V9.5Z" fill="#000" opacity=".3" transform="translate(1.200 1.200)"/><path d="M14.5 9.5V5.9Q14.5 3.0 17.5 3.0Q20.5 3.0 20.5 5.9V9.5Z" fill="#3c70ab" stroke="#1a3050" stroke-width="1"/><path d="M4 12L12 3" stroke="#e8141c" stroke-width="1.100" fill="none"/><path d="M9.500 3.300l3.200-.8-.6 3.300Z" fill="#e8141c"/></svg>
<svg style="left:380px;top:118px" width="24" height="24" viewBox="0 0 24 24"><path d="M3 5.500l5-2 3 4.500-5 2Z" fill="#3c70ab" stroke="#1a3050" stroke-width="1"/><path d="M8.500 14l4-3.500 4 3.500-4 4Z" fill="#3c70ab" stroke="#1a3050" stroke-width="1"/><path d="M15 21.5V17.9Q15 15.0 18.0 15.0Q21 15.0 21 17.9V21.5Z" fill="#000" opacity=".3" transform="translate(1.200 1.200)"/><path d="M15 21.5V17.9Q15 15.0 18.0 15.0Q21 15.0 21 17.9V21.5Z" fill="#3c70ab" stroke="#1a3050" stroke-width="1"/><path d="M17.500 2.500v6M14.500 5.500h6" stroke="#e8141c" stroke-width="1.300"/></svg>
<svg style="left:414px;top:117px" width="6" height="26"><rect width="6" height="26" fill="url(#gripp)"/></svg>
<svg style="left:425px;top:118px" width="24" height="24" viewBox="0 0 24 24"><ellipse cx="13" cy="21" rx="9" ry="1.600" fill="#000" opacity=".18"/><path d="M4 8l4.5 -4.5h11.5l-4.5 4.5Z" fill="#6fa0d6" stroke="#1a3050" stroke-width="1" stroke-linejoin="round"/><path d="M15.5 8l4.5 -4.5v11.5l-4.5 4.5Z" fill="#2a5487" stroke="#1a3050" stroke-width="1" stroke-linejoin="round"/><rect x="4" y="8" width="11.5" height="11.5" fill="#3c70ab" stroke="#1a3050" stroke-width="1"/><path d="M4 8l4.500-4.500h11.500v11.500l-4.500 4.500" fill="none" stroke="#e8141c" stroke-width="1.300"/></svg>
<svg style="left:456px;top:118px" width="24" height="24" viewBox="0 0 24 24"><ellipse cx="13" cy="21" rx="9" ry="1.600" fill="#000" opacity=".18"/><ellipse cx="12" cy="17" rx="10" ry="3.500" fill="#000" opacity=".25"/><path d="M3.500 8.500l3.500-4h12l2 4v8l-3 3H6l-2.500-3Z" fill="#3c70ab" stroke="#1a3050" stroke-width="1"/><path d="M7 4.500l-1 4h12l1-4" fill="#6fa0d6" stroke="#1a3050" stroke-width="1"/><path d="M3 11.500h18.500v3.500H3Z" fill="#e8141c" stroke="#7a1018" stroke-width=".6"/></svg>
<svg style="left:487px;top:118px" width="24" height="24" viewBox="0 0 24 24"><ellipse cx="13" cy="21" rx="9" ry="1.600" fill="#000" opacity=".18"/><ellipse cx="12" cy="17" rx="10" ry="3.500" fill="#000" opacity=".25"/><path d="M4.500 7.500l3.500-3.500h11.500l-1 4v7l-2.500 3H6Z" fill="#3c70ab" stroke="#1a3050" stroke-width="1"/><path d="M8 4l-2 4h12l1.500-4" fill="#6fa0d6" stroke="#1a3050" stroke-width="1"/><path d="M3 13h18.500v2.500H3Z" fill="#3a3a3a"/><path d="M4 16.500l2 3.500h10.500l3.500-3.500" fill="#f0f0f0" stroke="#333" stroke-width=".8"/></svg>
<svg style="left:518px;top:118px" width="24" height="24" viewBox="0 0 24 24"><ellipse cx="13" cy="21" rx="9" ry="1.600" fill="#000" opacity=".18"/><path d="M3 7l4 -4h14l-4 4Z" fill="#6cc493" stroke="#0e3a22" stroke-width="1" stroke-linejoin="round"/><path d="M17 7l4 -4v14l-4 4Z" fill="#2c8452" stroke="#0e3a22" stroke-width="1" stroke-linejoin="round"/><rect x="3" y="7" width="14" height="14" fill="#3ba36a" stroke="#0e3a22" stroke-width="1"/><circle cx="10" cy="14" r="5.300" fill="#3c70ab" stroke="#1a3050" stroke-width="1"/></svg>
<svg style="left:549px;top:118px" width="24" height="24" viewBox="0 0 24 24"><rect x="9.500" y="9.500" width="12" height="12" fill="#000" opacity=".25"/><rect x="8" y="8" width="12" height="12" fill="#dfe9f7" stroke="#1a3050" stroke-width="1"/><rect x="2.500" y="2.500" width="12" height="12" fill="#f4f8fd" stroke="#1a3050" stroke-width="1"/><rect x="8" y="8" width="6.500" height="6.500" fill="#f00" stroke="#8a0a0a" stroke-width=".7"/></svg>
<svg style="left:580px;top:118px" width="24" height="24" viewBox="0 0 24 24"><path d="M3.5 21V17.4Q3.5 14.5 6.5 14.5Q9.5 14.5 9.5 17.4V21Z" fill="#000" opacity=".3" transform="translate(1.200 1.200)"/><path d="M3.5 21V17.4Q3.5 14.5 6.5 14.5Q9.5 14.5 9.5 17.4V21Z" fill="#3c70ab" stroke="#1a3050" stroke-width="1"/><path d="M13.5 21V17.4Q13.5 14.5 16.5 14.5Q19.5 14.5 19.5 17.4V21Z" fill="#000" opacity=".3" transform="translate(1.200 1.200)"/><path d="M13.5 21V17.4Q13.5 14.5 16.5 14.5Q19.5 14.5 19.5 17.4V21Z" fill="#3c70ab" stroke="#1a3050" stroke-width="1"/><path d="M4 11V3.500L9.500 11V3.500" stroke="#1c1c8c" stroke-width="1.400" fill="none"/><path d="M11.500 7h8" stroke="#e8141c" stroke-width="1.100" fill="none"/><path d="M17.500 5l3.500 2-3.500 2Z" fill="#e8141c"/></svg>
<svg style="left:614px;top:117px" width="6" height="26"><rect width="6" height="26" fill="url(#gripp)"/></svg>
<svg style="left:625px;top:118px" width="24" height="24" viewBox="0 0 24 24"><path d="M5 13l7-6.500h9.500v7L14.500 20H5Z" fill="#2a5487" stroke="#1a3050" stroke-width="1"/><path d="M5 13l7-6.500h9.500L14.500 13Z" fill="#e8eef6" stroke="#1a3050" stroke-width="1"/><path d="M14.500 13L21.500 6.500M5 13h9.500v7" stroke="#1a3050" stroke-width="1" fill="none"/><path d="M8 13l7-6.500" stroke="#1a3050" stroke-width=".8"/><path d="M2.500 20V7" stroke="#e8141c" stroke-width="1.100" fill="none"/><path d="M.8 9.500l1.700-4 1.700 4Z" fill="#e8141c"/></svg>
<svg style="left:656px;top:118px" width="24" height="24" viewBox="0 0 24 24"><ellipse cx="13" cy="21" rx="9" ry="1.600" fill="#000" opacity=".18"/><path d="M2.500 17C2.500 9 7 5.500 12.500 5.500S21.500 9 22 16.500q-2.500 3-5.500 0c0-3-1.500-4.500-4-4.500s-4 2-4 5q-3 3-6 0Z" fill="#3c70ab" stroke="#1a3050" stroke-width="1"/><circle cx="5.500" cy="17" r="3.300" fill="#d04848" stroke="#7a1018" stroke-width=".6"/><path d="M7 4.500Q12.500 1 18 4.500" stroke="#e8141c" stroke-width="1.100" fill="none"/><path d="M16.500 2l3 3-4 .3Z" fill="#e8141c"/><path d="M12.500 3v19" stroke="#222" stroke-width=".7" stroke-dasharray="1.500 1.500"/></svg>
<svg style="left:687px;top:118px" width="24" height="24" viewBox="0 0 24 24"><ellipse cx="13" cy="21" rx="9" ry="1.600" fill="#000" opacity=".18"/><path d="M2.500 16.500C8 14 9.500 8 13 5l8 3C17 11 16.500 17.500 11 21Z" fill="#3c70ab" stroke="#1a3050" stroke-width="1"/><path d="M5.500 18C10 15 11.500 9.500 15.500 6M8.500 19.500C13 16 14 10.500 18.500 7.200M7.500 11.500L17 15" stroke="#e8141c" stroke-width=".9" fill="none"/></svg>
<svg style="left:718px;top:118px" width="24" height="24" viewBox="0 0 24 24"><ellipse cx="13" cy="21" rx="9" ry="1.600" fill="#000" opacity=".18"/><path d="M9 5C13 3 18 5.500 17 9.500 15.500 13 17 16 18 18.500 16 22 11 22 9.500 19.500 8 16 10.500 12.500 9 9.500 8 8 8 6.500 9 5Z" fill="#3c70ab" stroke="#1a3050" stroke-width="1"/><ellipse cx="13.500" cy="19" rx="4" ry="2.300" fill="#c84048" stroke="#5c1018" stroke-width=".6"/><ellipse cx="13" cy="6.500" rx="3.600" ry="1.800" fill="#2a5487"/><path d="M13 6.500C14 10 12 14 13.500 19" stroke="#e8141c" stroke-width=".9" fill="none"/><path d="M5 5C3.500 9 6.500 12 4 19" stroke="#e8141c" stroke-width=".9" fill="none" opacity=".8"/><path d="M4 7l1-3 1.500 2.800Z" fill="#e8141c"/></svg>
<svg style="left:749px;top:118px" width="24" height="24" viewBox="0 0 24 24"><ellipse cx="13" cy="21" rx="9" ry="1.600" fill="#000" opacity=".18"/><path d="M9 5C13 3 18 5.500 17 9.500 15.500 13 17 16 18 18.500 16 22 11 22 9.500 19.500 8 16 10.500 12.500 9 9.500 8 8 8 6.500 9 5Z" fill="#3c70ab" stroke="#1a3050" stroke-width="1"/><ellipse cx="13.500" cy="19" rx="4" ry="2.300" fill="#c84048" stroke="#5c1018" stroke-width=".6"/><ellipse cx="13" cy="6.500" rx="3.600" ry="1.800" fill="#2a5487"/><path d="M13 6.500C14 10 12 14 13.500 19" stroke="#e8141c" stroke-width=".9" fill="none"/><path d="M5 5C3.500 9 6.500 12 4 19" stroke="#e8141c" stroke-width=".9" fill="none" opacity=".8"/><path d="M4 7l1-3 1.500 2.800Z" fill="#e8141c"/></svg>
<svg style="left:780px;top:118px" width="24" height="24" viewBox="0 0 24 24"><ellipse cx="13" cy="21" rx="9" ry="1.600" fill="#000" opacity=".18"/><path d="M3.500 7l5-4.500 3 2.500v8.500l10 4-5 4-12-5Z" fill="#a82028" stroke="#5c0c14" stroke-width=".8"/><path d="M5.500 8l3-2.500 1.500 1.300v8.200l8 3.300-2.500 2-10-4Z" fill="#2e7a9c" stroke="#0c3040" stroke-width=".7"/><path d="M5.500 8v8.500l10 4" stroke="#7cc0dc" stroke-width=".7" fill="none"/></svg>
<svg style="left:815px;top:117px" width="6" height="26"><rect width="6" height="26" fill="url(#gripp)"/></svg>
<svg style="left:825px;top:118px" width="24" height="24" viewBox="0 0 24 24"><path d="M4.500 19L19.500 4.500" stroke="#3c70ab" stroke-width="1.800"/><path d="M5.500 20L20.500 5.500" stroke="#000" stroke-width="1" opacity=".18"/></svg>
<svg style="left:856px;top:118px" width="24" height="24" viewBox="0 0 24 24"><path d="M4.500 4.500L17 8.500C19.500 13 17 19.500 11.500 20.500 8 20.500 5.500 18.500 5.500 16.500" stroke="#3c70ab" stroke-width="1.200" fill="none"/><rect x="3.2" y="3.2" width="2.6" height="2.6" fill="#10151f" transform="rotate(45 4.5 4.5)"/><rect x="15.7" y="7.2" width="2.6" height="2.6" fill="#10151f" transform="rotate(45 17 8.5)"/><rect x="16.7" y="15.2" width="2.6" height="2.6" fill="#10151f" transform="rotate(45 18 16.5)"/><rect x="4.2" y="15.2" width="2.6" height="2.6" fill="#10151f" transform="rotate(45 5.5 16.5)"/></svg>
<svg style="left:887px;top:118px" width="24" height="24" viewBox="0 0 24 24"><rect x="6.500" y="6.500" width="14" height="14" fill="#000" opacity=".25"/><rect x="5" y="5" width="14" height="14" fill="#3c70ab" stroke="#1a3050" stroke-width="1"/></svg>
<svg style="left:918px;top:118px" width="24" height="24" viewBox="0 0 24 24"><ellipse cx="13" cy="21" rx="9" ry="1.600" fill="#000" opacity=".18"/><path d="M4 8l4.500-4.500H21L16.500 8Z" fill="#6fa0d6" stroke="#1a3050" stroke-width="1"/><rect x="4" y="8" width="12.500" height="12.500" fill="#3c70ab" stroke="#1a3050" stroke-width="1"/><path d="M16.500 20.500L21 16h-4.500" fill="#2a5487" stroke="#1a3050" stroke-width="1"/><path d="M17.500 9.500v6h3" stroke="#000" opacity=".3" fill="none"/></svg>
<svg style="left:949px;top:118px" width="24" height="24" viewBox="0 0 24 24"><ellipse cx="13" cy="21" rx="9" ry="1.600" fill="#000" opacity=".18"/><path d="M4 8l4.5 -4.5h12.5l-4.5 4.5Z" fill="#6fa0d6" stroke="#1a3050" stroke-width="1" stroke-linejoin="round"/><path d="M16.5 8l4.5 -4.5v12.5l-4.5 4.5Z" fill="#2a5487" stroke="#1a3050" stroke-width="1" stroke-linejoin="round"/><rect x="4" y="8" width="12.5" height="12.5" fill="#3c70ab" stroke="#1a3050" stroke-width="1"/></svg>
<svg style="left:980px;top:118px" width="24" height="24" viewBox="0 0 24 24"><ellipse cx="13" cy="21" rx="9" ry="1.600" fill="#000" opacity=".18"/><circle cx="7.500" cy="8.500" r="5" fill="#3c70ab" stroke="#1a3050" stroke-width="1"/><path d="M8 9.5l3.5 -3.5h10l-3.5 3.5Z" fill="#6fa0d6" stroke="#1a3050" stroke-width="1" stroke-linejoin="round"/><path d="M18 9.5l3.5 -3.5v10l-3.5 3.5Z" fill="#2a5487" stroke="#1a3050" stroke-width="1" stroke-linejoin="round"/><rect x="8" y="9.5" width="10" height="10" fill="#3c70ab" stroke="#1a3050" stroke-width="1"/></svg>
<svg style="left:1015px;top:117px" width="6" height="26"><rect width="6" height="26" fill="url(#gripp)"/></svg>
<svg style="left:1025px;top:118px" width="24" height="24" viewBox="0 0 24 24"><path d="M3 4h16.500V21" stroke="#e0d800" stroke-width="1.400" fill="none"/><path d="M9 4.500Q18.500 5 19 15" stroke="#e8141c" stroke-width="1.100" fill="none"/><circle cx="19.500" cy="4.500" r="1.800" fill="#f0c000" stroke="#e8141c" stroke-width=".8"/></svg>
<svg style="left:1056px;top:118px" width="24" height="24" viewBox="0 0 24 24"><ellipse cx="13" cy="21" rx="9" ry="1.600" fill="#000" opacity=".18"/><path d="M3 4.500h17.500V20q-6 1.500-10-1T3 4.500Z" fill="#3c70ab" stroke="#1a3050" stroke-width="1"/><path d="M11 5Q19 6 20 14" stroke="#e8141c" stroke-width="1.100" fill="none"/><circle cx="20.500" cy="4.500" r="1.800" fill="#f0c000" stroke="#e8141c" stroke-width=".8"/></svg>
<svg style="left:1087px;top:118px" width="24" height="24" viewBox="0 0 24 24"><ellipse cx="13" cy="21" rx="9" ry="1.600" fill="#000" opacity=".18"/><path d="M3 9.500l6-5.500h4.500l7.500 8v6.500l-4.500 3-11-6.500Z" fill="#3c70ab" stroke="#0e1a2c" stroke-width="1.200" stroke-linejoin="round"/><path d="M3.500 9.500Q6 4.500 10 4.500l9 9.500q-4 0-5.500 5Z" fill="#e04850" stroke="#5c1018" stroke-width=".7"/><path d="M5.500 8l9 9.500M7.500 6l9.500 9.500" stroke="#a82028" stroke-width=".6"/></svg>
<svg style="left:1118px;top:118px" width="24" height="24" viewBox="0 0 24 24"><ellipse cx="13" cy="21" rx="9" ry="1.600" fill="#000" opacity=".18"/><path d="M3 9.500l5.500-5.500h5l7.500 7.500v7l-4.500 3-11-5.500Z" fill="#3c70ab" stroke="#0e1a2c" stroke-width="1.200" stroke-linejoin="round"/><path d="M3.500 9.500l5.500-5.500 10 10-5.500 5Z" fill="#e8202c" stroke="#5c1018" stroke-width=".7"/></svg>
<svg style="left:1149px;top:118px" width="24" height="24" viewBox="0 0 24 24"><ellipse cx="13" cy="21" rx="9" ry="1.600" fill="#000" opacity=".18"/><path d="M3 7.5l4.5 -4.5h13.5l-4.5 4.5Z" fill="#6fa0d6" stroke="#0e1a2c" stroke-width="1" stroke-linejoin="round"/><path d="M16.5 7.5l4.5 -4.5v13.5l-4.5 4.5Z" fill="#2a5487" stroke="#0e1a2c" stroke-width="1" stroke-linejoin="round"/><rect x="3" y="7.5" width="13.5" height="13.5" fill="#3c70ab" stroke="#0e1a2c" stroke-width="1"/><path d="M6 14.500l2-2h5v4.500l-2 2H6Z" fill="#e8303c" stroke="#5c1018" stroke-width=".7"/><path d="M6 14.500h5v4.500M11 14.500l2-2" stroke="#5c1018" stroke-width=".7" fill="none"/></svg>
<svg style="left:1180px;top:118px" width="24" height="24" viewBox="0 0 24 24"><ellipse cx="13" cy="21" rx="9" ry="1.600" fill="#000" opacity=".18"/><path d="M3 7.5l4.5 -4.5h13.5l-4.5 4.5Z" fill="#6fa0d6" stroke="#0e1a2c" stroke-width="1" stroke-linejoin="round"/><path d="M16.5 7.5l4.5 -4.5v13.5l-4.5 4.5Z" fill="#2a5487" stroke="#0e1a2c" stroke-width="1" stroke-linejoin="round"/><rect x="3" y="7.5" width="13.5" height="13.5" fill="#3c70ab" stroke="#0e1a2c" stroke-width="1"/><rect x="5.500" y="10.500" width="9" height="7.500" fill="#e8303c" stroke="#5c1018" stroke-width=".7"/><rect x="8.500" y="10.500" width="6" height="4" fill="#f6f6f6"/></svg>
<svg style="left:53px;top:151px" width="6" height="26"><rect width="6" height="26" fill="url(#gripp)"/></svg>
<svg style="left:64px;top:152px" width="24" height="24" viewBox="0 0 24 24"><ellipse cx="13" cy="14" rx="10" ry="5.500" fill="#000" opacity=".3"/><path d="M2 12q3-5.500 10-5.500T22 12q-3 5.500-10 5.500T2 12Z" fill="#3c70ab" stroke="#0e1a2c" stroke-width="1.200"/><path d="M6 8.500v7M9.500 7v10M13 6.500v11M16.500 7.500v9M19.500 9v6M3 10.500h18M2.500 13.500h19" stroke="#0e1a2c" stroke-width=".8" fill="none"/></svg>
<svg style="left:95px;top:152px" width="24" height="24" viewBox="0 0 24 24"><path d="M6 4q6-2 12 0 1.500 8 0 16-6 2.500-12 0-1.500-8 0-16Z" fill="#3c70ab" stroke="#0e1a2c" stroke-width="1.200"/><ellipse cx="12" cy="4.300" rx="6" ry="1.600" fill="#6fa0d6" stroke="#0e1a2c" stroke-width=".8"/><path d="M5.300 8q6.700 2.500 13.400 0M5 12q7 2.500 14 0M5.300 16q6.700 2.500 13.400 0M9 5.500v16M13 6v16M16.500 5.500v15" stroke="#0e1a2c" stroke-width=".8" fill="none"/></svg>
<svg style="left:129px;top:151px" width="6" height="26"><rect width="6" height="26" fill="url(#gripp)"/></svg>
<svg style="left:140px;top:152px" width="24" height="24" viewBox="0 0 24 24"><defs><linearGradient id="tlg" x1="0" y1="0" x2="1" y2="1"><stop offset="0" stop-color="#5ab0a8"/><stop offset="1" stop-color="#1c6c70"/></linearGradient></defs><path d="M2 14C6 8.500 9 11 13 8.500 16.500 6 19.500 4 23.500 5.500 20 8 20.500 14 19.500 20.500 15 20.500 13 16.500 9.500 14.500 6.500 13 4.500 15 2.500 17Z" fill="url(#tlg)"/></svg>
<svg style="left:329px;top:211px" width="6" height="26"><rect width="6" height="26" fill="url(#gripp)"/></svg>
<svg style="left:342px;top:212px" width="24" height="24" viewBox="0 0 24 24"><rect x="6" y="4" width="15" height="12" rx="2" fill="#6a6a6a" stroke="#2a2a2a" stroke-width="1"/><rect x="13" y="2.500" width="5" height="2.500" fill="#444"/><circle cx="18.500" cy="6.500" r="1" fill="#f03030"/><circle cx="12.500" cy="11" r="4" fill="#c9c9c9" stroke="#333" stroke-width="1"/><rect x="2" y="9" width="12" height="11" rx="2" fill="#8a8a8a" stroke="#2a2a2a" stroke-width="1"/><circle cx="7.500" cy="14.500" r="4.300" fill="#e4ecf0" stroke="#444" stroke-width="1"/><circle cx="6.500" cy="13.500" r="1.700" fill="#fff"/></svg>
<svg style="left:373px;top:212px" width="24" height="24" viewBox="0 0 24 24"><defs><radialGradient id="msg" cx="40%" cy="35%"><stop offset="0" stop-color="#fff"/><stop offset="1" stop-color="#d4d4d4"/></radialGradient></defs><path d="M6 13C4 7 8.500 2.500 12.500 3.500 17 4.500 21.500 12 20 17.500 18.500 22 9 22.500 6 13Z" fill="url(#msg)" stroke="#bdbdbd" stroke-width=".8"/><ellipse cx="11" cy="7" rx="1.400" ry="2.300" fill="#5a7ad8" transform="rotate(-20 11 7)"/></svg>
<svg style="left:404px;top:212px" width="24" height="24" viewBox="0 0 24 24"><path d="M7 2v12M2 6.500h17" stroke="#333" stroke-width="1.200"/><circle cx="15.500" cy="13" r="5" fill="#d6e6ea" stroke="#4a4a4a" stroke-width="1.300"/><path d="M12 17l-5.500 5" stroke="#3a3a3a" stroke-width="2.200" stroke-linecap="round"/></svg>
<svg style="left:435px;top:212px" width="24" height="24" viewBox="0 0 24 24"><rect x="2.500" y="2.500" width="19" height="19" fill="#1c62c8" stroke="#0e2c6c" stroke-width="1"/><path d="M10 8v13l3-3 2.500 5 2-1-2.500-5h4.500Z" fill="#1c2450" stroke="#9cb0e0" stroke-width=".7"/></svg>
<svg style="left:466px;top:212px" width="24" height="24" viewBox="0 0 24 24"><rect x="2.500" y="2.500" width="19" height="19" fill="#d0ac14" stroke="#6c580c" stroke-width="1"/><path d="M10 8v13l3-3 2.500 5 2-1-2.500-5h4.500Z" fill="#1c2450" stroke="#9cb0e0" stroke-width=".7"/></svg>
<svg style="left:497px;top:212px" width="24" height="24" viewBox="0 0 24 24"><path d="M11.500 3v14.500h11M11.500 17.500L4 22" stroke="#3a3a2a" stroke-width="1.600" fill="none"/><path d="M12.500 3.500v13.500h10" stroke="#e0dca0" stroke-width=".8" fill="none"/><path d="M10 5l1.500-3.500L13 5Z" fill="#333"/></svg>
<svg style="left:528px;top:212px" width="24" height="24" viewBox="0 0 24 24"><circle cx="14.500" cy="9.500" r="5.800" fill="#d6e6ea" stroke="#5a5a5a" stroke-width="1.400"/><circle cx="13" cy="8" r="2.500" fill="#fff" opacity=".7"/><path d="M10.500 14l-6.500 7" stroke="#4a4a4a" stroke-width="2.400" stroke-linecap="round"/><path d="M2 6V2.500h3.500M17.500 2.500H21V6M2 17v3.500h3.500M17.500 20.500H21V17" stroke="#f8f000" stroke-width="1.300" fill="none"/></svg>
<svg style="left:559px;top:212px" width="24" height="24" viewBox="0 0 24 24"><rect x="4.500" y="3.500" width="15" height="15" fill="none" stroke="#8a8a8a" stroke-width="1"/><circle cx="14.500" cy="9.500" r="5.800" fill="#d6e6ea" stroke="#5a5a5a" stroke-width="1.400"/><circle cx="13" cy="8" r="2.500" fill="#fff" opacity=".7"/><path d="M10.500 14l-6.500 7" stroke="#4a4a4a" stroke-width="2.400" stroke-linecap="round"/><path d="M3 2.500l2 2M18 20l2.500 2" stroke="#f8f000" stroke-width="1.300"/></svg>
<svg style="left:590px;top:212px" width="24" height="24" viewBox="0 0 24 24"><circle cx="14.500" cy="9.500" r="5.800" fill="#d6e6ea" stroke="#5a5a5a" stroke-width="1.400"/><circle cx="13" cy="8" r="2.500" fill="#fff" opacity=".7"/><path d="M10.500 14l-6.500 7" stroke="#4a4a4a" stroke-width="2.400" stroke-linecap="round"/><path d="M3.500 4.500h4M17 20.500h5M19.500 18v5" stroke="#f8f000" stroke-width="1.400"/></svg>
<svg style="left:621px;top:212px" width="24" height="24" viewBox="0 0 24 24"><g fill="#e05058" stroke="#7a2028" stroke-width=".7"><path d="M12 1.500l4 4.500h-2.500v3.500h-3V6H8Z"/><path d="M12 22.500l4-4.500h-2.500v-3.500h-3V18H8Z"/><path d="M1.500 12l4.500-4v2.500h3.500v3H6V16Z"/><path d="M22.500 12l-4.500-4v2.500h-3.500v3H18V16Z"/></g><rect x="10" y="10" width="4" height="4" fill="#f4f4f4" stroke="#888" stroke-width=".5"/></svg>
<svg style="left:652px;top:212px" width="24" height="24" viewBox="0 0 24 24"><rect x="4.500" y="4.500" width="15" height="15" fill="#e8e8e8" stroke="#8a8a8a" stroke-width="1"/><g fill="#e05058" stroke="#7a2028" stroke-width=".6"><path d="M12 9.500l3.500-4h-2V2h-3v3.500h-2Z"/><path d="M12 14.500l3.500 4h-2V22h-3v-3.500h-2Z"/><path d="M9.500 12l-4-3.500v2H2v3h3.500v2Z"/><path d="M14.500 12l4-3.500v2H22v3h-3.500v2Z"/><path d="M4 4l3.500.5-3 3ZM20 4l-3.500.5 3 3ZM4 20l3.500-.5-3-3ZM20 20l-3.500-.5 3-3Z"/></g></svg>
<svg style="left:683px;top:212px" width="24" height="24" viewBox="0 0 24 24"><path d="M7 20C13 20 15.500 14 12.500 8.500l3-1.500-6.500-2-1 6.500 2.500-1.500C12 14 10 17 6.500 17.500Z" fill="#f8f000" stroke="#6c6400" stroke-width=".8"/><path d="M15 6l3-2.500h4v4l-3 2.500h-4Z" fill="#5a7ac0" stroke="#1c2c58" stroke-width=".8"/><path d="M15 6h4v4M19 6l3-2.500" stroke="#1c2c58" stroke-width=".7" fill="none"/><circle cx="5" cy="20" r="1.800" fill="#e01818"/></svg>
<svg style="left:714px;top:212px" width="24" height="24" viewBox="0 0 24 24"><circle cx="13" cy="12.500" r="6.500" fill="#7a7ad0" stroke="#1c1c58" stroke-width="1"/><circle cx="11" cy="10.500" r="2.500" fill="#b4b4ec"/><path d="M4 6C9 1 18 2 20.500 8l-2 1C16.500 5 10 4 6 8Z" fill="#f8f000" stroke="#6c6400" stroke-width=".7"/><path d="M2.500 5.500l5 .5-2.500 4Z" fill="#f8f000" stroke="#6c6400" stroke-width=".7"/><path d="M4 20l17-13M6 8l13 13" stroke="#222" stroke-width=".7"/></svg>
<svg style="left:745px;top:212px" width="24" height="24" viewBox="0 0 24 24"><path d="M3.5 8l4.5 -4.5h12.5l-4.5 4.5Z" fill="#8a8ac8" stroke="#1c1c48" stroke-width="1" stroke-linejoin="round"/><path d="M16.0 8l4.5 -4.5v12.5l-4.5 4.5Z" fill="#8a8ac8" stroke="#1c1c48" stroke-width="1" stroke-linejoin="round"/><rect x="3.5" y="8" width="12.5" height="12.5" fill="#f8f000" stroke="#1c1c48" stroke-width="1"/></svg>
<svg style="left:776px;top:212px" width="24" height="24" viewBox="0 0 24 24"><path d="M3.5 8l4.5 -4.5h12.5l-4.5 4.5Z" fill="#8a8ac8" stroke="#1c1c48" stroke-width="1" stroke-linejoin="round"/><path d="M16.0 8l4.5 -4.5v12.5l-4.5 4.5Z" fill="#8a8ac8" stroke="#1c1c48" stroke-width="1" stroke-linejoin="round"/><rect x="3.5" y="8" width="12.5" height="12.5" fill="#8a8ac8" stroke="#1c1c48" stroke-width="1"/><rect x="8" y="6" width="9" height="9" fill="#f8f000" stroke="#1c1c48" stroke-width=".7"/><path d="M3.500 8L8 6M16 8l1-2M3.500 20.500L8 15M16 20.500l1-5.500" stroke="#1c1c48" stroke-width=".6"/></svg>
<svg style="left:807px;top:212px" width="24" height="24" viewBox="0 0 24 24"><path d="M3.5 8l4.5 -4.5h12.5l-4.5 4.5Z" fill="#f8f000" stroke="#1c1c48" stroke-width="1" stroke-linejoin="round"/><path d="M16.0 8l4.5 -4.5v12.5l-4.5 4.5Z" fill="#8a8ac8" stroke="#1c1c48" stroke-width="1" stroke-linejoin="round"/><rect x="3.5" y="8" width="12.5" height="12.5" fill="#8a8ac8" stroke="#1c1c48" stroke-width="1"/></svg>
<svg style="left:838px;top:212px" width="24" height="24" viewBox="0 0 24 24"><path d="M3.5 8l4.5 -4.5h12.5l-4.5 4.5Z" fill="#8a8ac8" stroke="#1c1c48" stroke-width="1" stroke-linejoin="round"/><path d="M16.0 8l4.5 -4.5v12.5l-4.5 4.5Z" fill="#8a8ac8" stroke="#1c1c48" stroke-width="1" stroke-linejoin="round"/><rect x="3.5" y="8" width="12.5" height="12.5" fill="#8a8ac8" stroke="#1c1c48" stroke-width="1"/><path d="M4 20l3.500-3h8.500l-.5 3Z" fill="#f8f000" stroke="#1c1c48" stroke-width=".6"/><path d="M7.500 17V8.500M7.500 17h9" stroke="#1c1c48" stroke-width=".6"/></svg>
<svg style="left:869px;top:212px" width="24" height="24" viewBox="0 0 24 24"><path d="M3.5 8l4.5 -4.5h12.5l-4.5 4.5Z" fill="#8a8ac8" stroke="#1c1c48" stroke-width="1" stroke-linejoin="round"/><path d="M16.0 8l4.5 -4.5v12.5l-4.5 4.5Z" fill="#8a8ac8" stroke="#1c1c48" stroke-width="1" stroke-linejoin="round"/><rect x="3.5" y="8" width="12.5" height="12.5" fill="#8a8ac8" stroke="#1c1c48" stroke-width="1"/><path d="M4 8.500l3-2.500v11l-3 3Z" fill="#f8f000" stroke="#1c1c48" stroke-width=".6"/><path d="M7 17h9" stroke="#1c1c48" stroke-width=".6"/></svg>
<svg style="left:900px;top:212px" width="24" height="24" viewBox="0 0 24 24"><path d="M3.5 8l4.5 -4.5h12.5l-4.5 4.5Z" fill="#8a8ac8" stroke="#1c1c48" stroke-width="1" stroke-linejoin="round"/><path d="M16.0 8l4.5 -4.5v12.5l-4.5 4.5Z" fill="#f8f000" stroke="#1c1c48" stroke-width="1" stroke-linejoin="round"/><rect x="3.5" y="8" width="12.5" height="12.5" fill="#8a8ac8" stroke="#1c1c48" stroke-width="1"/></svg>
<svg style="left:931px;top:212px" width="24" height="24" viewBox="0 0 24 24"><path d="M8 7.500A7.300 7.300 0 1 1 6 16" stroke="#1c4cc8" stroke-width="2.600" fill="none"/><path d="M4 4l1 8 7-3.500Z" fill="#1c4cc8"/></svg>
<svg style="left:962px;top:212px" width="24" height="24" viewBox="0 0 24 24"><path d="M16 7.500A7.300 7.300 0 1 0 18 16" stroke="#1c4cc8" stroke-width="2.600" fill="none"/><path d="M20 4l-1 8-7-3.500Z" fill="#1c4cc8"/></svg>
<svg style="left:993px;top:212px" width="24" height="24" viewBox="0 0 24 24"><path d="M5 9C5 4 10 1.500 13.500 3.500l-1.500 2 6 .5-2-5.500-1.200 1.600C10 -1 2.500 3 3 10Z" fill="#f8f000" stroke="#6c6400" stroke-width=".7"/><path d="M13 6v11h9M13 17l-5 4" stroke="#111" stroke-width="1.300" fill="none"/><path d="M11.500 8l1.500-3 1.500 3ZM20 15.500l3 1.500-3 1.500Z" fill="#111"/><path d="M6 14C6 20 12 23 17 20.500l-1-2.500 5 2-2.500 4-.7-1.800C11 25 4 21 4.500 14Z" fill="#e84850" stroke="#7a1018" stroke-width=".6"/></svg>
<svg style="left:1024px;top:212px" width="24" height="24" viewBox="0 0 24 24"><rect x="7" y="3" width="12" height="9" rx="2" fill="#9a9a9a" stroke="#6a6a6a"/><circle cx="12" cy="8" r="3" fill="#c4c4c4" stroke="#777"/><rect x="3" y="6" width="11" height="9" rx="2" fill="#a8a8a8" stroke="#6a6a6a"/><circle cx="8" cy="10.500" r="3" fill="#d4d4d4" stroke="#777"/><path d="M12 13l2 7.500h-3l-1 1.500h9l-1-1.500h-2.500l-1-7.500" fill="#8e8e8e" stroke="#6a6a6a" stroke-width=".8"/></svg>
<svg style="left:1055px;top:212px" width="24" height="24" viewBox="0 0 24 24"><path d="M6 3l1.500 1.500L9 3l1 2 2-.5-.5 2 2 1-1.500 1.500 1.500 1.500-2 1" fill="none" stroke="#111" stroke-width="1.100"/><circle cx="7.500" cy="7" r="2.500" fill="#f8f000" stroke="#111" stroke-width="1"/><rect x="10" y="10" width="12" height="11.500" fill="#f8f000" stroke="#111" stroke-width="1.200"/><path d="M10 13.500h12M10 16.500h12M10 19h12M14 10v11.500M18 10v11.500" stroke="#111" stroke-width=".8"/></svg>
<div class="a sep" style="left:1085px;top:211px;height:25px"></div><div class="a" style="left:1086px;top:211px;height:25px;width:1px;background:#fff"></div>
<svg style="left:1091px;top:212px" width="24" height="24" viewBox="0 0 24 24"><rect x="3" y="3" width="15" height="12" fill="#5a6ad0" stroke="#1c2458" stroke-width="1"/><rect x="3" y="3" width="15" height="2.500" fill="#7a6ad8"/><rect x="15" y="3.500" width="2" height="1.500" fill="#f04040"/><rect x="6.500" y="8.500" width="15.500" height="12.500" fill="#1c2030" stroke="#5a6ad0" stroke-width="1.300"/><rect x="6.500" y="8.500" width="15.500" height="2.500" fill="#6a6ad8"/><rect x="19" y="9" width="2" height="1.500" fill="#f04040"/><path d="M14 13v4M14 17l-3.500 2.500M14 17l4 1.500" stroke="#30c8e8" stroke-width="1.200" fill="none"/></svg>
<div class="a sep" style="left:1122px;top:211px;height:25px"></div><div class="a" style="left:1123px;top:211px;height:25px;width:1px;background:#fff"></div>
<svg style="left:1129px;top:212px" width="24" height="24" viewBox="0 0 24 24"><path d="M2 8l7-2.500v13.500l-7-2.500Z" fill="#e87838" opacity=".9"/><path d="M2 8l7-2.500v13.500l-7-2.500Z" fill="none" stroke="#c85818" stroke-width=".5"/><path d="M15 5.500q5 1 7 6.500-2 5.500-7 6.500Z" fill="#f0a048" stroke="#d87828" stroke-width=".5"/><path d="M12 2v20" stroke="#111" stroke-width="1.500"/></svg>
<svg style="left:1159px;top:212px" width="24" height="24" viewBox="0 0 24 24"><path d="M2.500 3v19h19.500v-4.500H7V3Z" fill="#b4e08a" stroke="#111" stroke-width="1.100"/><path d="M9 18v2M12 18v3M15 18v2M18 18v3M4.500 6h2M4 9h2.500M4.500 12h2M4 15h2.500" stroke="#111" stroke-width=".8"/><path d="M8.500 6.500l3-3h10v10l-3 3h-10Z" fill="#5a7ad0" stroke="#111" stroke-width="1"/><rect x="9.500" y="7.500" width="3" height="8" fill="#e84848"/><rect x="12.500" y="7.500" width="3" height="8" fill="#48c848"/><rect x="15.500" y="7.500" width="2.500" height="8" fill="#4868e8"/><path d="M8.500 6.500h10v10M18.500 6.500l3-3" stroke="#111" stroke-width=".8" fill="none"/></svg>
<svg style="left:1190px;top:212px" width="24" height="24" viewBox="0 0 24 24"><path d="M8 9l4-3h8v8l-4 3H8Z" fill="#e4e4e4" stroke="#6a6a6a" stroke-width=".8"/><path d="M8 9h8v8M16 9l4-3" stroke="#6a6a6a" stroke-width=".8" fill="none"/><path d="M8 17V2.500" stroke="#e01818" stroke-width="1.200"/><path d="M6.500 4.500L8 1.500l1.500 3Z" fill="#e01818"/><path d="M8 17h14" stroke="#e8d800" stroke-width="1.400"/><path d="M20.500 15.500l3 1.500-3 1.500Z" fill="#e8d800"/><path d="M8 17l-5.500 5" stroke="#3838e0" stroke-width="1.300"/><path d="M1.500 20.500v2.500h2.500Z" fill="#3838e0"/><path d="M6.500 7h3M6.500 10h3M6.500 13h3M11 15.500v3M14 15.500v3M17 15.500v3" stroke="#333" stroke-width=".6"/></svg>
<svg style="left:1221px;top:212px" width="24" height="24" viewBox="0 0 24 24"><defs><radialGradient id="blg" cx="40%" cy="35%"><stop offset="0" stop-color="#fff"/><stop offset="1" stop-color="#c4ccd4"/></radialGradient></defs><path d="M7 8.500a6 6 0 1 1 12 0c0 3-2.500 4-2.500 7h-7C9.500 12.500 7 11.500 7 8.500Z" fill="url(#blg)" stroke="#9aa4ac" stroke-width=".8"/><rect x="10" y="15.500" width="6" height="3.500" fill="#8a8a8a" stroke="#555" stroke-width=".6"/><path d="M2.500 14C4 10 8 10 9.500 13l-2 .5C6.500 12 5 12.500 4.500 14.500Z" fill="#f8f000" stroke="#6c6400" stroke-width=".6"/><path d="M11 22.500C16 23.500 19.500 20 18.500 16l2.500-.5-4.500-3.500-2 5.500 2-.5C17 19.500 14.500 21 11.500 20.500Z" fill="#f8f000" stroke="#6c6400" stroke-width=".7"/><path d="M10 19l2 4.500-4.500-1Z" fill="#f8f000" stroke="#6c6400" stroke-width=".6"/></svg>
<svg style="left:1252px;top:212px" width="24" height="24" viewBox="0 0 24 24"><rect x="3.500" y="3.500" width="17" height="17" fill="#f4f4f4" stroke="#8a8a8a" stroke-width="1"/><rect x="6" y="6" width="8" height="8" fill="#fff" stroke="#111" stroke-width="2"/><rect x="11" y="11" width="7" height="7" fill="#fff" stroke="#111" stroke-width="2"/></svg>
<svg style="left:1283px;top:212px" width="24" height="24" viewBox="0 0 24 24"><rect x="1.5" y="1.5" width="11.500" height="10" fill="#5a6ad0" stroke="#28307a" stroke-width=".8"/><rect x="1.5" y="1.5" width="11.500" height="2" fill="#7a5ad8"/><rect x="10.5" y="1.8" width="1.800" height="1.300" fill="#f04040"/><path d="M4.5 5.5l2 2.500-2 2M6.5 8.0h4" stroke="#30d8f0" stroke-width="1" fill="none"/><rect x="11" y="12.5" width="11.500" height="10" fill="#5a6ad0" stroke="#28307a" stroke-width=".8"/><rect x="11" y="12.5" width="11.500" height="2" fill="#7a5ad8"/><rect x="20" y="12.8" width="1.800" height="1.300" fill="#f04040"/><path d="M14 16.5l2 2.500-2 2M16 19.0h4" stroke="#30d8f0" stroke-width="1" fill="none"/><g stroke="#f01828" stroke-width="1.100" fill="none"><path d="M16 8l6-6M19 2h3v3M15 5l4-4M15.500 1.500h-1.500M8 16l-6 6M2 19v3h3M9 19l-4 4"/></g></svg>
<svg style="left:1305px;top:210px" width="24" height="24" viewBox="0 0 24 24"><path d="M10 8h4v4h2.500L12 16.500 7.500 12H10Z" fill="#111"/></svg>
</body></html>
